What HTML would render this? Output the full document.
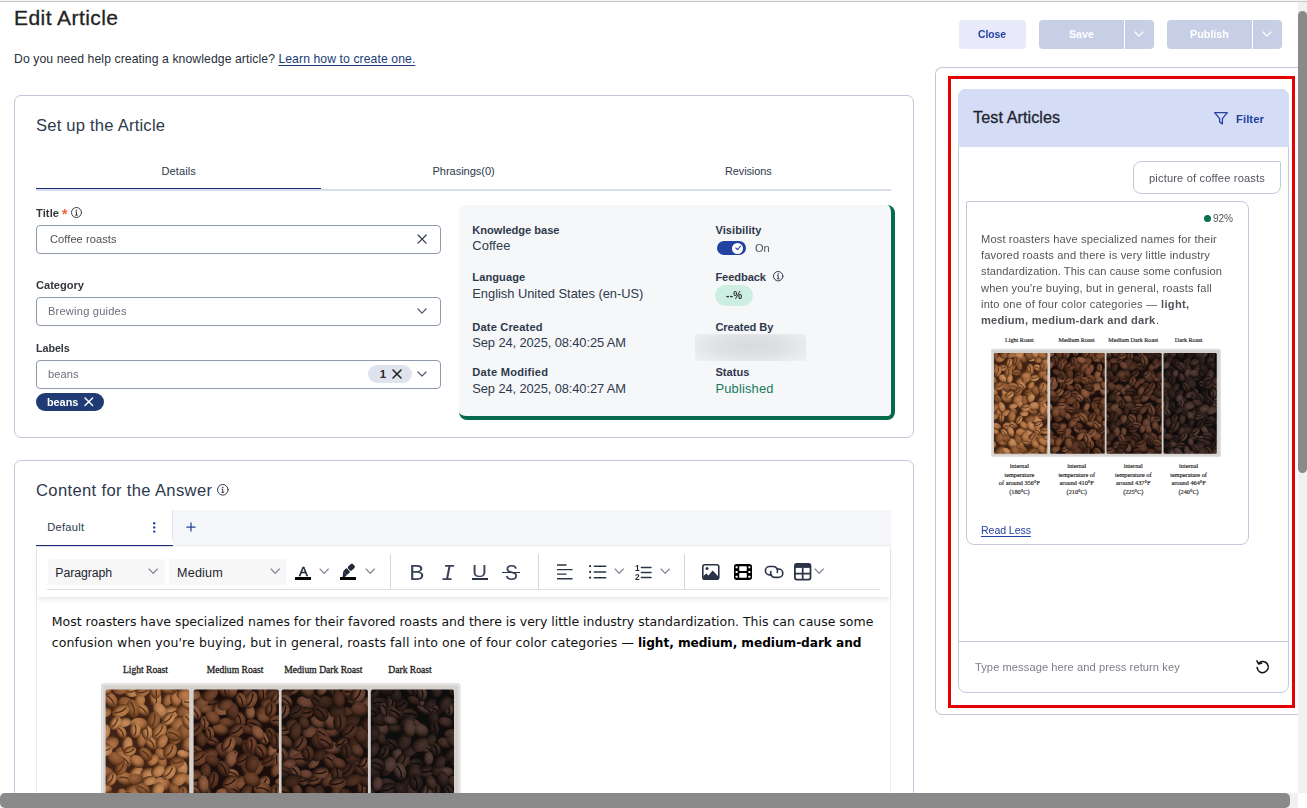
<!DOCTYPE html>
<html lang="en">
<head>
<meta charset="utf-8">
<title>Edit Article</title>
<style>
html,body{margin:0;padding:0;background:#fff}
body{width:1307px;height:808px;overflow:hidden;font-family:"Liberation Sans",sans-serif;color:#2e394c}
#app{position:relative;width:1307px;height:808px;overflow:hidden}
.g{will-change:transform}
#app *{position:absolute;box-sizing:border-box;margin:0;padding:0}
.t{white-space:pre;line-height:20px}
#app b,#app strong{position:static;font-weight:700}
a{color:inherit}
.card{border:1px solid #c2c6d8;border-radius:7px;background:#fff}
.inp{border:1px solid #8e99ad;border-radius:4px;background:#fff}
svg{overflow:visible}
#app svg *{position:static}
.ic{fill:none;stroke:#2e394c;stroke-width:1.3;stroke-linecap:round;stroke-linejoin:round}
.btn{border-radius:4px}
p{white-space:pre;line-height:20px}
</style>
</head>
<body>
<div id="app">
<header>
<div style="left:0px;top:0px;width:1307px;height:1px;background:#f6f6fa"></div>
<div style="left:0px;top:1px;width:1307px;height:1px;background:#c9c9c9"></div>
<h1 class="t" style="left:14.00px;top:8.00px;font-size:21px;color:#242424;letter-spacing:0.435px;font-weight:400;-webkit-text-stroke:0.3px #242424;">Edit Article</h1>
<span class="t" style="left:14.00px;top:49.00px;font-size:12.2px;color:#2a2f3a;letter-spacing:0.092px;">Do you need help creating a knowledge article? </span>
<a class="t" style="left:278.40px;top:49.00px;font-size:12.2px;color:#203b73;letter-spacing:0.089px;text-decoration:underline;text-underline-offset:2px;">Learn how to create one.</a>
<div class="btn" style="left:959px;top:20px;width:67px;height:29px;background:#e8eaf9"></div>
<span class="t g" style="left:978.40px;top:25.00px;font-size:10.4px;color:#23419f;font-weight:700;letter-spacing:-0.049px;">Close</span>
<div style="left:1039px;top:20px;width:85px;height:29px;background:#c7cfe7;border-radius:4px 0 0 4px"></div>
<div style="left:1125px;top:20px;width:29px;height:29px;background:#c7cfe7;border-radius:0 4px 4px 0"></div>
<span class="t g" style="left:1068.90px;top:24.00px;font-size:10.8px;color:#fff;font-weight:700;letter-spacing:-0.106px;">Save</span>
<svg class="ic" style="left:1135.0px;top:32.199999999999996px;" width="8" height="4.2" viewBox="0 0 8 4.2"><path d="M0 0L4.0 4.2L8 0" stroke="#fff" stroke-width="1.2"/></svg>
<div style="left:1167px;top:20px;width:85px;height:29px;background:#c7cfe7;border-radius:4px 0 0 4px"></div>
<div style="left:1253px;top:20px;width:29px;height:29px;background:#c7cfe7;border-radius:0 4px 4px 0"></div>
<span class="t g" style="left:1190.00px;top:24.00px;font-size:10.9px;color:#fff;font-weight:700;letter-spacing:-0.057px;">Publish</span>
<svg class="ic" style="left:1263.1px;top:32.199999999999996px;" width="8" height="4.2" viewBox="0 0 8 4.2"><path d="M0 0L4.0 4.2L8 0" stroke="#fff" stroke-width="1.2"/></svg>
</header>
<section>
<div class="card" style="left:14px;top:95px;width:900px;height:343px;"></div>
<h2 class="t" style="left:36.00px;top:116.00px;font-size:16.6px;color:#2e394c;letter-spacing:0.209px;font-weight:400;">Set up the Article</h2>
<div style="left:36px;top:189px;width:855px;height:2px;background:#d9deee"></div>
<div style="left:36px;top:188px;width:285px;height:1px;background:#1c2f75"></div>
<span class="t" style="left:161.50px;top:161.00px;font-size:11.1px;color:#2e394c;letter-spacing:0.080px;">Details</span>
<span class="t" style="left:432.50px;top:161.00px;font-size:11.1px;color:#2e394c;letter-spacing:-0.063px;">Phrasings(0)</span>
<span class="t" style="left:725.00px;top:161.00px;font-size:10.9px;color:#2e394c;letter-spacing:-0.077px;">Revisions</span>
<span class="t g" style="left:36.00px;top:203.00px;font-size:11.1px;color:#33363b;font-weight:700;letter-spacing:0.098px;">Title</span>
<span class="t g" style="left:61.80px;top:203.60px;font-size:14px;color:#f4602f;font-weight:700;">*</span>
<svg class="ic" style="left:70.85px;top:207.0px;" width="11.0" height="11.0" viewBox="0 0 11.0 11.0"><circle cx="5.5" cy="5.5" r="5.0" stroke="#3a3d44" stroke-width="1"/><circle cx="5.5" cy="3.2" r="0.75" fill="#3a3d44" stroke="none"/><path d="M4.3 4.9H5.5V8.1M4.1 8.1H6.9" stroke="#3a3d44" stroke-width="1" stroke-linecap="butt"/></svg>
<div class="inp" style="left:36px;top:225px;width:405px;height:29px;"></div>
<span class="t g" style="left:50.00px;top:229.00px;font-size:11.1px;color:#4b4e54;letter-spacing:0.060px;">Coffee roasts</span>
<svg class="ic" style="left:418.09999999999997px;top:235.3px;" width="8.2" height="8.2" viewBox="0 0 8.2 8.2"><path d="M0 0L8.2 8.2M8.2 0L0 8.2" stroke="#2e394c" stroke-width="1.2"/></svg>
<span class="t g" style="left:36.00px;top:275.00px;font-size:11.1px;color:#33363b;font-weight:700;letter-spacing:-0.013px;">Category</span>
<div class="inp" style="left:36px;top:297px;width:405px;height:29px;"></div>
<span class="t g" style="left:48.00px;top:301.00px;font-size:11.1px;color:#6b6f7b;letter-spacing:0.203px;">Brewing guides</span>
<svg class="ic" style="left:418.0px;top:308.9px;" width="8" height="4.2" viewBox="0 0 8 4.2"><path d="M0 0L4.0 4.2L8 0" stroke="#4b5566" stroke-width="1.2"/></svg>
<span class="t g" style="left:36.00px;top:338.00px;font-size:10.8px;color:#33363b;font-weight:700;letter-spacing:-0.084px;">Labels</span>
<div class="inp" style="left:36px;top:360px;width:405px;height:29px;"></div>
<span class="t g" style="left:48.00px;top:364.00px;font-size:11.1px;color:#6b6f7b;letter-spacing:0.066px;">beans</span>
<div style="left:368px;top:365px;width:44px;height:18px;background:#dfe3ee;border-radius:9px"></div>
<span class="t" style="left:379.80px;top:364.00px;font-size:11.4px;color:#26282d;font-weight:700;">1</span>
<svg class="ic" style="left:393.2px;top:370.3px;" width="8" height="8" viewBox="0 0 8 8"><path d="M0 0L8 8M8 0L0 8" stroke="#1c1c1c" stroke-width="1.5"/></svg>
<svg class="ic" style="left:418.0px;top:371.9px;" width="8" height="4.2" viewBox="0 0 8 4.2"><path d="M0 0L4.0 4.2L8 0" stroke="#4b5566" stroke-width="1.2"/></svg>
<div style="left:36px;top:393px;width:68px;height:18px;background:#203b73;border-radius:9px"></div>
<span class="t g" style="left:46.90px;top:392.00px;font-size:10.9px;color:#fff;font-weight:700;letter-spacing:-0.046px;">beans</span>
<svg class="ic" style="left:85.3px;top:398.3px;" width="7.6" height="7.6" viewBox="0 0 7.6 7.6"><path d="M0 0L7.6 7.6M7.6 0L0 7.6" stroke="#fff" stroke-width="1.4"/></svg>
<div style="left:459px;top:205px;width:436px;height:215px;background:#f6f7f9;border:solid #056a4c;border-width:0 4px 4px 0;border-radius:8px"></div>
<span class="t" style="left:472.30px;top:220.00px;font-size:11.1px;color:#2e394c;font-weight:700;letter-spacing:-0.027px;">Knowledge base</span>
<span class="t" style="left:472.30px;top:236.00px;font-size:12.9px;color:#2e394c;letter-spacing:0.070px;">Coffee</span>
<span class="t" style="left:472.30px;top:267.00px;font-size:11.1px;color:#2e394c;font-weight:700;letter-spacing:0.071px;">Language</span>
<span class="t" style="left:472.30px;top:284.00px;font-size:12.9px;color:#2e394c;letter-spacing:-0.030px;">English United States (en-US)</span>
<span class="t" style="left:472.30px;top:317.00px;font-size:11.1px;color:#2e394c;font-weight:700;letter-spacing:0.160px;">Date Created</span>
<span class="t" style="left:472.30px;top:333.00px;font-size:12.9px;color:#2e394c;letter-spacing:-0.106px;">Sep 24, 2025, 08:40:25 AM</span>
<span class="t" style="left:472.30px;top:362.00px;font-size:11.1px;color:#2e394c;font-weight:700;letter-spacing:0.247px;">Date Modified</span>
<span class="t" style="left:472.30px;top:379.00px;font-size:12.9px;color:#2e394c;letter-spacing:-0.106px;">Sep 24, 2025, 08:40:27 AM</span>
<span class="t" style="left:715.40px;top:220.00px;font-size:11.1px;color:#2e394c;font-weight:700;letter-spacing:0.075px;">Visibility</span>
<div style="left:717px;top:241px;width:29px;height:14px;background:#23419f;border-radius:7px"></div>
<div style="left:732.3px;top:242.6px;width:11px;height:11px;background:#fff;border-radius:50%"></div>
<svg class="ic" style="left:734.6px;top:245.3px;" width="6.4" height="5.6" viewBox="0 0 6.4 5.6"><path d="M0.8 3L2.6 4.7L5.6 1" stroke="#23419f" stroke-width="1.1"/></svg>
<span class="t g" style="left:755.00px;top:238.00px;font-size:11.0px;color:#4b4e54;letter-spacing:-0.087px;">On</span>
<span class="t" style="left:715.40px;top:267.00px;font-size:11.1px;color:#2e394c;font-weight:700;letter-spacing:-0.084px;">Feedback</span>
<svg class="ic" style="left:773.0999999999999px;top:271.40000000000003px;" width="10.4" height="10.4" viewBox="0 0 10.4 10.4"><circle cx="5.2" cy="5.2" r="4.7" stroke="#2e394c" stroke-width="1"/><circle cx="5.2" cy="2.9000000000000004" r="0.75" fill="#2e394c" stroke="none"/><path d="M4.0 4.6000000000000005H5.2V7.800000000000001M3.8000000000000003 7.800000000000001H6.6" stroke="#2e394c" stroke-width="1" stroke-linecap="butt"/></svg>
<div style="left:715px;top:285px;width:38px;height:21px;background:#ccefe2;border-radius:10.5px"></div>
<span class="t g" style="left:726.20px;top:286.00px;font-size:10px;color:#2a2d33;font-weight:700;letter-spacing:0.319px;">--%</span>
<span class="t" style="left:715.40px;top:317.00px;font-size:11.1px;color:#2e394c;font-weight:700;letter-spacing:-0.053px;">Created By</span>
<div style="left:695px;top:334px;width:111px;height:27px;border-radius:3px;background:radial-gradient(ellipse 62% 75% at 50% 45%,#d9dadd 0%,#dfe0e3 45%,#eeeff1 100%)"></div>
<span class="t" style="left:715.40px;top:362.00px;font-size:11.1px;color:#2e394c;font-weight:700;letter-spacing:0.039px;">Status</span>
<span class="t" style="left:715.40px;top:379.00px;font-size:12.9px;color:#157a5c;letter-spacing:0.184px;">Published</span>
</section>
<section>
<div class="card" style="left:14px;top:460px;width:900px;height:400px;"></div>
<h2 class="t" style="left:36.00px;top:481.00px;font-size:16.6px;color:#2e394c;letter-spacing:0.342px;font-weight:400;">Content for the Answer</h2>
<svg class="ic" style="left:217.39999999999998px;top:484.4px;" width="11.6" height="11.6" viewBox="0 0 11.6 11.6"><circle cx="5.8" cy="5.8" r="5.3" stroke="#2e394c" stroke-width="1"/><circle cx="5.8" cy="3.5" r="0.75" fill="#2e394c" stroke="none"/><path d="M4.6 5.2H5.8V8.4M4.4 8.4H7.199999999999999" stroke="#2e394c" stroke-width="1" stroke-linecap="butt"/></svg>
<div style="left:173px;top:510px;width:718px;height:36px;background:#f5f6fa;border-bottom:1px solid #ebecef"></div>
<div style="left:172px;top:510px;width:1px;height:31px;background:#e3e6f0"></div>
<div style="left:36px;top:545px;width:137px;height:1px;background:#1c2f75;box-shadow:0 0.5px 0 rgba(28,47,117,0.35)"></div>
<span class="t" style="left:47.30px;top:517.00px;font-size:11.1px;color:#2e394c;letter-spacing:0.257px;">Default</span>
<svg class="ic" style="left:152.6px;top:521.6px;" width="2.4" height="10.8" viewBox="0 0 2.4 10.8"><circle cx="1.2" cy="1.2" r="1.2" fill="#23419f" stroke="none"/><circle cx="1.2" cy="5.4" r="1.2" fill="#23419f" stroke="none"/><circle cx="1.2" cy="9.6" r="1.2" fill="#23419f" stroke="none"/></svg>
<svg class="ic" style="left:186.2px;top:522.2px;" width="10" height="10" viewBox="0 0 10 10"><path d="M5 0.4V9.6M0.4 5H9.6" stroke="#23419f" stroke-width="1.25" stroke-linecap="butt"/></svg>
<div style="left:36px;top:547px;width:855px;height:300px;border:1px solid #e9ebf1;border-top:0;background:#fff"></div>
<div style="left:37px;top:547px;width:853px;height:50px;background:#fff;box-shadow:0 3px 5px -1px rgba(40,50,70,0.13)"></div>
<div style="left:47px;top:589px;width:833px;height:1px;background:#dcdee3"></div>
<div style="left:48px;top:559px;width:117px;height:26px;background:#f7f7f8;border-radius:3px"></div>
<span class="t" style="left:55.30px;top:563.00px;font-size:12.3px;color:#1f2430;letter-spacing:-0.092px;">Paragraph</span>
<svg class="ic" style="left:149.0px;top:569.0px;" width="8.4" height="4.4" viewBox="0 0 8.4 4.4"><path d="M0 0L4.2 4.4L8.4 0" stroke="#7a8290" stroke-width="1.1"/></svg>
<div style="left:169px;top:559px;width:117px;height:26px;background:#f7f7f8;border-radius:3px"></div>
<span class="t" style="left:177.00px;top:563.00px;font-size:12.6px;color:#1f2430;letter-spacing:0.201px;">Medium</span>
<svg class="ic" style="left:271.1px;top:569.0px;" width="8.4" height="4.4" viewBox="0 0 8.4 4.4"><path d="M0 0L4.2 4.4L8.4 0" stroke="#7a8290" stroke-width="1.1"/></svg>
<span class="t g" style="left:298.60px;top:561.60px;font-size:13.2px;color:#1f2937;-webkit-text-stroke:0.6px #1f2937;">A</span>
<div style="left:294.5px;top:577.1px;width:16.5px;height:2.7px;background:#050505"></div>
<svg class="ic" style="left:320.40000000000003px;top:569.0px;" width="8.4" height="4.4" viewBox="0 0 8.4 4.4"><path d="M0 0L4.2 4.4L8.4 0" stroke="#7a8290" stroke-width="1.1"/></svg>
<svg class="ic" style="left:339.6px;top:563.2px;" width="16.6" height="14" viewBox="0 0 16.6 14"><g transform="translate(8.3 7.1) rotate(-43)" fill="#1f2937" stroke="none"><rect x="0.9" y="-2.7" width="6.6" height="5.4" rx="1.7"/><rect x="-4.3" y="-2.7" width="4.4" height="5.4" rx="0.4"/><path d="M-4.3 -2.7L-8.6 0.9V2.7H-4.3Z"/></g></svg>
<div style="left:339.6px;top:577.1px;width:16.5px;height:2.7px;background:#050505"></div>
<svg class="ic" style="left:366.40000000000003px;top:569.0px;" width="8.4" height="4.4" viewBox="0 0 8.4 4.4"><path d="M0 0L4.2 4.4L8.4 0" stroke="#7a8290" stroke-width="1.1"/></svg>
<div style="left:390px;top:554px;width:1px;height:35px;background:#d4d6db"></div>
<span class="t" style="left:409.20px;top:562.00px;font-size:22.8px;color:#3a4358;">B</span>
<span class="t" style="left:441.20px;top:564.00px;font-size:22.6px;color:#3a4358;font-family:'Liberation Mono', monospace;font-style:italic;">I</span>
<span class="t" style="left:471.90px;top:561.50px;font-size:17px;color:#3a4358;transform:scaleX(1.22);transform-origin:0 50%;">U</span>
<div style="left:472.1px;top:578.4px;width:15.7px;height:1.4px;background:#2b3446"></div>
<span class="t" style="left:504.60px;top:563.00px;font-size:22.6px;color:#3a4358;transform:scaleX(0.86);transform-origin:0 50%;">S</span>
<div style="left:502px;top:571.8px;width:18px;height:1.3px;background:#2b3446"></div>
<div style="left:538px;top:554px;width:1px;height:35px;background:#d4d6db"></div>
<svg class="ic" style="left:557.2px;top:564px;" width="16" height="15.6" viewBox="0 0 16 15.6"><path d="M0 0.95H9.5M0 5.6H15.5M0 10.1H9.5M0 14.7H15.5" stroke="#2b3446" stroke-width="1.4" stroke-linecap="butt"/></svg>
<svg class="ic" style="left:589px;top:565px;" width="17.2" height="14" viewBox="0 0 17.2 14"><path d="M5.3 1.2H16.7M5.3 6.9H16.7M5.3 12.7H16.7" stroke="#2b3446" stroke-width="1.5"/><circle cx="1.1" cy="1.2" r="1.1" fill="#2b3446" stroke="none"/><circle cx="1.1" cy="6.9" r="1.1" fill="#2b3446" stroke="none"/><circle cx="1.1" cy="12.7" r="1.1" fill="#2b3446" stroke="none"/></svg>
<svg class="ic" style="left:615.3px;top:569.0px;" width="8.4" height="4.4" viewBox="0 0 8.4 4.4"><path d="M0 0L4.2 4.4L8.4 0" stroke="#7a8290" stroke-width="1.1"/></svg>
<svg class="ic" style="left:635px;top:564.5px;will-change:transform;" width="16.4" height="15" viewBox="0 0 16.4 15"><path d="M6.4 2.4H16M6.4 7.4H16M6.4 12.4H16" stroke="#2b3446" stroke-width="1.5"/><text x="-0.1" y="6.3" font-family="Liberation Sans, sans-serif" font-weight="700" font-size="8.4" fill="#1f2937" stroke="none">1</text><text x="-0.1" y="14.6" font-family="Liberation Sans, sans-serif" font-weight="700" font-size="8.4" fill="#1f2937" stroke="none">2</text></svg>
<svg class="ic" style="left:661.4px;top:569.0px;" width="8.4" height="4.4" viewBox="0 0 8.4 4.4"><path d="M0 0L4.2 4.4L8.4 0" stroke="#7a8290" stroke-width="1.1"/></svg>
<div style="left:684px;top:554px;width:1px;height:35px;background:#d4d6db"></div>
<svg class="ic" style="left:702.2px;top:564px;" width="17.6" height="16" viewBox="0 0 17.6 16"><rect x="0.8" y="0.8" width="16" height="14.4" rx="2" stroke="#2b3446" stroke-width="1.6"/><circle cx="5" cy="4.5" r="1.5" fill="#2b3446" stroke="none"/><path d="M1.2 15V12L4.3 9.6L6.4 11.4L10.7 6.4L16.4 12.6V15Z" fill="#2b3446" stroke="none"/></svg>
<svg class="ic" style="left:734px;top:564.1px;" width="18" height="15.9" viewBox="0 0 18 15.9"><rect x="0" y="0" width="18" height="15.9" rx="2.6" fill="#000" stroke="none"/><rect x="5.2" y="2.2" width="7.6" height="4.8" rx="0.8" fill="#fff" stroke="none"/><rect x="5.2" y="9" width="7.6" height="4.8" rx="0.8" fill="#fff" stroke="none"/><g fill="#fff" stroke="none"><rect x="1.6" y="2.3" width="2" height="2" rx="0.5"/><rect x="1.6" y="7" width="2" height="2" rx="0.5"/><rect x="1.6" y="11.7" width="2" height="2" rx="0.5"/><rect x="14.4" y="2.3" width="2" height="2" rx="0.5"/><rect x="14.4" y="7" width="2" height="2" rx="0.5"/><rect x="14.4" y="11.7" width="2" height="2" rx="0.5"/></g></svg>
<svg class="ic" style="left:765px;top:566px;" width="18.4" height="12" viewBox="0 0 18.4 12"><path d="M6.4 8.9H4.6A4.2 4.2 0 0 1 4.6 0.5H8.4A4.2 4.2 0 0 1 12.3 6.3" stroke="#2b3446" stroke-width="1.6"/><path d="M11.8 3H13.6A4.2 4.2 0 0 1 13.6 11.4H9.8A4.2 4.2 0 0 1 5.9 5.6" stroke="#2b3446" stroke-width="1.6"/></svg>
<svg class="ic" style="left:794.2px;top:563.2px;" width="17.4" height="17.5" viewBox="0 0 17.4 17.5"><rect x="0.9" y="0.9" width="15.6" height="15.7" rx="2" stroke="#2b3446" stroke-width="1.8"/><rect x="0.9" y="0.9" width="15.6" height="4" fill="#2b3446" stroke="none"/><path d="M8.7 4.5V16.6M0.9 10.7H16.5" stroke="#2b3446" stroke-width="1.7" stroke-linecap="butt"/></svg>
<svg class="ic" style="left:815.1999999999999px;top:569.0px;" width="8.4" height="4.4" viewBox="0 0 8.4 4.4"><path d="M0 0L4.2 4.4L8.4 0" stroke="#7a8290" stroke-width="1.1"/></svg>
<p class="t" style="left:51.80px;top:612.00px;font-size:12.5px;color:#111;font-family:'DejaVu Sans', sans-serif;letter-spacing:-0.013px;">Most roasters have specialized names for their favored roasts and there is very little industry standardization. This can cause some</p>
<p class="t" style="left:51.80px;top:633.00px;font-size:12.5px;color:#111;font-family:'DejaVu Sans', sans-serif;letter-spacing:0.098px;">confusion when you're buying, but in general, roasts fall into one of four color categories — </p>
<p class="t" style="left:638.00px;top:633.00px;font-size:12.2px;color:#000;font-family:'DejaVu Sans', sans-serif;font-weight:700;letter-spacing:-0.080px;">light, medium, medium-dark and</p>
<svg class="pic" style="left:101.1px;top:660px" width="360.60" height="134.00" viewBox="0 0 360.6 134.00" role="img" aria-label="Coffee roasts: light, medium, medium dark and dark"><defs><filter id="bla" x="-5%" y="-5%" width="110%" height="110%"><feGaussianBlur stdDeviation="0.45"/></filter><radialGradient id="ga00" cx="0.42" cy="0.36" r="0.62"><stop offset="0" stop-color="#c28150"/><stop offset="0.55" stop-color="#a66c40"/><stop offset="1" stop-color="#583218"/></radialGradient><radialGradient id="ga01" cx="0.42" cy="0.36" r="0.62"><stop offset="0" stop-color="#b27548"/><stop offset="0.55" stop-color="#986139"/><stop offset="1" stop-color="#583218"/></radialGradient><radialGradient id="ga02" cx="0.42" cy="0.36" r="0.62"><stop offset="0" stop-color="#9e653d"/><stop offset="0.55" stop-color="#86532f"/><stop offset="1" stop-color="#583218"/></radialGradient><radialGradient id="ga03" cx="0.42" cy="0.36" r="0.62"><stop offset="0" stop-color="#cd8e5c"/><stop offset="0.55" stop-color="#b0784b"/><stop offset="1" stop-color="#583218"/></radialGradient><clipPath id="ca0"><rect x="4.6" y="29.6" width="83.6" height="157.8" rx="2"/></clipPath><radialGradient id="ga10" cx="0.42" cy="0.36" r="0.62"><stop offset="0" stop-color="#835237"/><stop offset="0.55" stop-color="#6e422a"/><stop offset="1" stop-color="#2c180f"/></radialGradient><radialGradient id="ga11" cx="0.42" cy="0.36" r="0.62"><stop offset="0" stop-color="#744730"/><stop offset="0.55" stop-color="#603824"/><stop offset="1" stop-color="#2c180f"/></radialGradient><radialGradient id="ga12" cx="0.42" cy="0.36" r="0.62"><stop offset="0" stop-color="#623c2a"/><stop offset="0.55" stop-color="#502e1e"/><stop offset="1" stop-color="#2c180f"/></radialGradient><radialGradient id="ga13" cx="0.42" cy="0.36" r="0.62"><stop offset="0" stop-color="#935f42"/><stop offset="0.55" stop-color="#7c4e34"/><stop offset="1" stop-color="#2c180f"/></radialGradient><clipPath id="ca1"><rect x="92.6" y="29.6" width="85.3" height="157.8" rx="2"/></clipPath><radialGradient id="ga20" cx="0.42" cy="0.36" r="0.62"><stop offset="0" stop-color="#643f2f"/><stop offset="0.55" stop-color="#523123"/><stop offset="1" stop-color="#1e120d"/></radialGradient><radialGradient id="ga21" cx="0.42" cy="0.36" r="0.62"><stop offset="0" stop-color="#543527"/><stop offset="0.55" stop-color="#44281c"/><stop offset="1" stop-color="#1e120d"/></radialGradient><radialGradient id="ga22" cx="0.42" cy="0.36" r="0.62"><stop offset="0" stop-color="#462d23"/><stop offset="0.55" stop-color="#372118"/><stop offset="1" stop-color="#1e120d"/></radialGradient><radialGradient id="ga23" cx="0.42" cy="0.36" r="0.62"><stop offset="0" stop-color="#714a39"/><stop offset="0.55" stop-color="#5e3b2c"/><stop offset="1" stop-color="#1e120d"/></radialGradient><clipPath id="ca2"><rect x="180.6" y="29.6" width="86.3" height="157.8" rx="2"/></clipPath><radialGradient id="ga30" cx="0.42" cy="0.36" r="0.62"><stop offset="0" stop-color="#49342d"/><stop offset="0.55" stop-color="#3a2721"/><stop offset="1" stop-color="#160e0c"/></radialGradient><radialGradient id="ga31" cx="0.42" cy="0.36" r="0.62"><stop offset="0" stop-color="#3d2c27"/><stop offset="0.55" stop-color="#2f201c"/><stop offset="1" stop-color="#160e0c"/></radialGradient><radialGradient id="ga32" cx="0.42" cy="0.36" r="0.62"><stop offset="0" stop-color="#342623"/><stop offset="0.55" stop-color="#271b18"/><stop offset="1" stop-color="#160e0c"/></radialGradient><radialGradient id="ga33" cx="0.42" cy="0.36" r="0.62"><stop offset="0" stop-color="#564039"/><stop offset="0.55" stop-color="#46322c"/><stop offset="1" stop-color="#160e0c"/></radialGradient><clipPath id="ca3"><rect x="269.8" y="29.6" width="83.2" height="157.8" rx="2"/></clipPath></defs><g font-family="Liberation Serif, serif" font-size="9.6" fill="#1c1c1c" stroke="#222" stroke-width="0.3" text-anchor="middle"><text x="44.4" y="13">Light Roast</text><text x="134.0" y="13">Medium Roast</text><text x="222.4" y="13">Medium Dark Roast</text><text x="309.0" y="13">Dark Roast</text></g><rect x="0" y="23.2" width="359.6" height="169.2" rx="3" fill="#dddbd9"/><rect x="1.6" y="24.8" width="356.40000000000003" height="166.0" rx="2.5" fill="#d4d1ce" stroke="#e8e6e4" stroke-width="1.2"/><g clip-path="url(#ca0)"><g filter="url(#bla)"><rect x="2.5999999999999996" y="27.6" width="87.6" height="161.8" fill="#402412"/><g transform="translate(17.8 94.2)rotate(106)"><ellipse rx="7.4" ry="4.9" fill="url(#ga02)"/></g><g transform="translate(34.4 113.6)rotate(133)"><ellipse rx="8.9" ry="5.6" fill="url(#ga03)"/></g><g transform="translate(31.4 131.5)rotate(149)"><ellipse rx="8.9" ry="6.3" fill="url(#ga01)"/></g><g transform="translate(60.6 101)rotate(79)"><ellipse rx="8.1" ry="5" fill="url(#ga01)"/></g><g transform="translate(74.8 143.5)rotate(25)"><ellipse rx="8.8" ry="5.7" fill="url(#ga00)"/></g><g transform="translate(38.6 40.9)rotate(100)"><ellipse rx="7.5" ry="5.4" fill="url(#ga00)"/></g><g transform="translate(4.6 129)rotate(8)"><ellipse rx="6.8" ry="4.4" fill="url(#ga00)"/></g><g transform="translate(31.9 30.7)rotate(164)"><ellipse rx="8.2" ry="6.2" fill="url(#ga03)"/><path d="M-5.7 .6Q0 -2.5 5.7 .4" fill="none" stroke="#543016" stroke-width="1.3"/></g><g transform="translate(26 44.7)rotate(36)"><ellipse rx="9.3" ry="6.8" fill="url(#ga02)"/></g><g transform="translate(19.7 28.6)rotate(169)"><ellipse rx="8.1" ry="5.7" fill="url(#ga02)"/></g><g transform="translate(54.4 38.4)rotate(81)"><ellipse rx="9.1" ry="6" fill="url(#ga03)"/><path d="M-6.4 .6Q0 -2.4 6.4 .4" fill="none" stroke="#543016" stroke-width="1.3"/></g><g transform="translate(41.5 49.5)rotate(43)"><ellipse rx="7.8" ry="5" fill="url(#ga00)"/><path d="M-5.5 .6Q0 -2 5.5 .4" fill="none" stroke="#543016" stroke-width="1.3"/></g><g transform="translate(74.8 78.9)rotate(140)"><ellipse rx="7.4" ry="4.8" fill="url(#ga02)"/><path d="M-5.2 .6Q0 -1.9 5.2 .4" fill="none" stroke="#543016" stroke-width="1.3"/></g><g transform="translate(22.8 99.7)rotate(40)"><ellipse rx="9.1" ry="7.2" fill="url(#ga00)"/><path d="M-6.4 .6Q0 -2.9 6.4 .4" fill="none" stroke="#543016" stroke-width="1.3"/></g><g transform="translate(76.5 63.4)rotate(150)"><ellipse rx="8" ry="6.4" fill="url(#ga01)"/></g><g transform="translate(31.9 48.5)rotate(76)"><ellipse rx="9.4" ry="6.5" fill="url(#ga02)"/><path d="M-6.6 .6Q0 -2.6 6.6 .4" fill="none" stroke="#543016" stroke-width="1.3"/></g><g transform="translate(26.1 85.1)rotate(100)"><ellipse rx="8.6" ry="5.4" fill="url(#ga03)"/></g><g transform="translate(50.3 82.8)rotate(53)"><ellipse rx="7.7" ry="5.5" fill="url(#ga00)"/><path d="M-5.4 .6Q0 -2.2 5.4 .4" fill="none" stroke="#543016" stroke-width="1.3"/></g><g transform="translate(19.6 50.7)rotate(158)"><ellipse rx="9.2" ry="6.1" fill="url(#ga00)"/><path d="M-6.4 .6Q0 -2.4 6.4 .4" fill="none" stroke="#543016" stroke-width="1.3"/></g><g transform="translate(59.8 94.1)rotate(49)"><ellipse rx="6.7" ry="5.1" fill="url(#ga01)"/></g><g transform="translate(69.3 52.2)rotate(170)"><ellipse rx="9" ry="6.7" fill="url(#ga03)"/><path d="M-6.3 .6Q0 -2.7 6.3 .4" fill="none" stroke="#543016" stroke-width="1.3"/></g><g transform="translate(58.2 71.3)rotate(126)"><ellipse rx="9.2" ry="6.6" fill="url(#ga00)"/><path d="M-6.4 .6Q0 -2.7 6.4 .4" fill="none" stroke="#543016" stroke-width="1.3"/></g><g transform="translate(83.3 50.2)rotate(161)"><ellipse rx="8.8" ry="5.8" fill="url(#ga02)"/></g><g transform="translate(24 118.5)rotate(15)"><ellipse rx="8.4" ry="6.4" fill="url(#ga01)"/><path d="M-5.9 .6Q0 -2.6 5.9 .4" fill="none" stroke="#543016" stroke-width="1.3"/></g><g transform="translate(58.9 51.1)rotate(61)"><ellipse rx="9" ry="6.3" fill="url(#ga03)"/></g><g transform="translate(40.4 80.1)rotate(95)"><ellipse rx="7.4" ry="4.7" fill="url(#ga01)"/></g><g transform="translate(15.3 99.2)rotate(33)"><ellipse rx="9.3" ry="6.2" fill="url(#ga02)"/></g><g transform="translate(54.4 31.1)rotate(80)"><ellipse rx="8.1" ry="5.3" fill="url(#ga01)"/><path d="M-5.7 .6Q0 -2.1 5.7 .4" fill="none" stroke="#543016" stroke-width="1.3"/></g><g transform="translate(60.8 124.2)rotate(7)"><ellipse rx="8.9" ry="7.1" fill="url(#ga00)"/></g><g transform="translate(46 72.3)rotate(85)"><ellipse rx="8.1" ry="5.3" fill="url(#ga03)"/><path d="M-5.7 .6Q0 -2.1 5.7 .4" fill="none" stroke="#543016" stroke-width="1.3"/></g><g transform="translate(80.5 108.6)rotate(89)"><ellipse rx="8.9" ry="6.2" fill="url(#ga03)"/></g><g transform="translate(88.4 120.5)rotate(41)"><ellipse rx="7.5" ry="4.9" fill="url(#ga01)"/></g><g transform="translate(83.4 72.7)rotate(73)"><ellipse rx="8.6" ry="6.3" fill="url(#ga02)"/></g><g transform="translate(80.3 134.8)rotate(113)"><ellipse rx="8.9" ry="5.6" fill="url(#ga02)"/><path d="M-6.3 .6Q0 -2.2 6.3 .4" fill="none" stroke="#543016" stroke-width="1.3"/></g><g transform="translate(72.9 129.2)rotate(69)"><ellipse rx="6.8" ry="5" fill="url(#ga02)"/></g><g transform="translate(41.7 128.8)rotate(33)"><ellipse rx="8.5" ry="5.4" fill="url(#ga02)"/><path d="M-6 .6Q0 -2.1 6 .4" fill="none" stroke="#543016" stroke-width="1.3"/></g><g transform="translate(76.2 102.1)rotate(175)"><ellipse rx="7.3" ry="5.8" fill="url(#ga02)"/><path d="M-5.1 .6Q0 -2.3 5.1 .4" fill="none" stroke="#543016" stroke-width="1.3"/></g><g transform="translate(87.7 61.5)rotate(64)"><ellipse rx="9.3" ry="6.3" fill="url(#ga00)"/><path d="M-6.5 .6Q0 -2.5 6.5 .4" fill="none" stroke="#543016" stroke-width="1.3"/></g><g transform="translate(66.6 40.1)rotate(118)"><ellipse rx="6.8" ry="4.6" fill="url(#ga01)"/></g><g transform="translate(82.6 94.3)rotate(16)"><ellipse rx="6.6" ry="4.4" fill="url(#ga03)"/></g><g transform="translate(93.3 102.9)rotate(113)"><ellipse rx="7.7" ry="5.2" fill="url(#ga00)"/></g><g transform="translate(56.5 130)rotate(118)"><ellipse rx="8.1" ry="6.1" fill="url(#ga03)"/></g><g transform="translate(9.5 39.7)rotate(51)"><ellipse rx="8.6" ry="6.1" fill="url(#ga01)"/><path d="M-6 .6Q0 -2.4 6 .4" fill="none" stroke="#543016" stroke-width="1.3"/></g><g transform="translate(90.3 143.6)rotate(113)"><ellipse rx="8.9" ry="7" fill="url(#ga01)"/></g><g transform="translate(77.9 119.1)rotate(146)"><ellipse rx="8.7" ry="6.3" fill="url(#ga00)"/></g><g transform="translate(69 91)rotate(123)"><ellipse rx="8.2" ry="6.4" fill="url(#ga01)"/><path d="M-5.8 .6Q0 -2.6 5.8 .4" fill="none" stroke="#543016" stroke-width="1.3"/></g><g transform="translate(23.3 62.1)rotate(173)"><ellipse rx="6.7" ry="4.9" fill="url(#ga03)"/></g><g transform="translate(87 83.5)rotate(113)"><ellipse rx="8.2" ry="6" fill="url(#ga01)"/></g><g transform="translate(51.7 99.9)rotate(135)"><ellipse rx="6.6" ry="5" fill="url(#ga00)"/></g><g transform="translate(4.4 29.2)rotate(45)"><ellipse rx="6.8" ry="5.1" fill="url(#ga00)"/></g><g transform="translate(12.3 139.1)rotate(42)"><ellipse rx="7.3" ry="5.5" fill="url(#ga03)"/></g><g transform="translate(60.8 81.3)rotate(123)"><ellipse rx="7.7" ry="5.4" fill="url(#ga00)"/></g><g transform="translate(5.7 112.4)rotate(27)"><ellipse rx="8.4" ry="5.3" fill="url(#ga02)"/></g><g transform="translate(88.8 43.8)rotate(24)"><ellipse rx="8.5" ry="6.2" fill="url(#ga03)"/><path d="M-6 .6Q0 -2.5 6 .4" fill="none" stroke="#543016" stroke-width="1.3"/></g><g transform="translate(14.2 63)rotate(125)"><ellipse rx="7.4" ry="5.4" fill="url(#ga03)"/><path d="M-5.1 .6Q0 -2.2 5.1 .4" fill="none" stroke="#543016" stroke-width="1.3"/></g><g transform="translate(74.6 38.9)rotate(84)"><ellipse rx="8" ry="5.7" fill="url(#ga00)"/></g><g transform="translate(53.6 143)rotate(15)"><ellipse rx="8.1" ry="5.5" fill="url(#ga03)"/><path d="M-5.7 .6Q0 -2.2 5.7 .4" fill="none" stroke="#543016" stroke-width="1.3"/></g><g transform="translate(47.2 113.7)rotate(174)"><ellipse rx="7.9" ry="6.1" fill="url(#ga03)"/></g><g transform="translate(83.1 33.9)rotate(167)"><ellipse rx="7.7" ry="6" fill="url(#ga00)"/></g><g transform="translate(3.4 52.2)rotate(171)"><ellipse rx="7" ry="5" fill="url(#ga01)"/></g><g transform="translate(67.6 28.7)rotate(20)"><ellipse rx="8.4" ry="5.6" fill="url(#ga02)"/><path d="M-5.9 .6Q0 -2.2 5.9 .4" fill="none" stroke="#543016" stroke-width="1.3"/></g><g transform="translate(38.3 64.2)rotate(4)"><ellipse rx="9.1" ry="6.4" fill="url(#ga00)"/></g><g transform="translate(67.8 112.5)rotate(131)"><ellipse rx="8.5" ry="5.9" fill="url(#ga03)"/><path d="M-6 .6Q0 -2.4 6 .4" fill="none" stroke="#543016" stroke-width="1.3"/></g><g transform="translate(34.6 119.2)rotate(0)"><ellipse rx="7.5" ry="5.8" fill="url(#ga02)"/></g><g transform="translate(19.8 108.5)rotate(128)"><ellipse rx="6.9" ry="5.5" fill="url(#ga02)"/><path d="M-4.9 .6Q0 -2.2 4.9 .4" fill="none" stroke="#543016" stroke-width="1.3"/></g><g transform="translate(28.7 91.2)rotate(157)"><ellipse rx="6.8" ry="4.7" fill="url(#ga00)"/><path d="M-4.7 .6Q0 -1.9 4.7 .4" fill="none" stroke="#543016" stroke-width="1.3"/></g><g transform="translate(38.3 144.9)rotate(9)"><ellipse rx="7.8" ry="5.2" fill="url(#ga00)"/><path d="M-5.5 .6Q0 -2.1 5.5 .4" fill="none" stroke="#543016" stroke-width="1.3"/></g><g transform="translate(73 74.7)rotate(27)"><ellipse rx="8.5" ry="6.2" fill="url(#ga02)"/><path d="M-5.9 .6Q0 -2.5 5.9 .4" fill="none" stroke="#543016" stroke-width="1.3"/></g><g transform="translate(56.8 110.9)rotate(141)"><ellipse rx="7.5" ry="5.7" fill="url(#ga03)"/></g><g transform="translate(9 83)rotate(164)"><ellipse rx="8.9" ry="6.5" fill="url(#ga01)"/></g><g transform="translate(21 135.1)rotate(81)"><ellipse rx="6.7" ry="5.1" fill="url(#ga01)"/></g><g transform="translate(41.5 31.7)rotate(167)"><ellipse rx="7.4" ry="4.7" fill="url(#ga01)"/><path d="M-5.2 .6Q0 -1.9 5.2 .4" fill="none" stroke="#543016" stroke-width="1.3"/></g><g transform="translate(44.9 94.3)rotate(46)"><ellipse rx="7.8" ry="5.2" fill="url(#ga02)"/><path d="M-5.4 .6Q0 -2.1 5.4 .4" fill="none" stroke="#543016" stroke-width="1.3"/></g><g transform="translate(10.1 119.2)rotate(120)"><ellipse rx="7.3" ry="5.1" fill="url(#ga00)"/><path d="M-5.1 .6Q0 -2.1 5.1 .4" fill="none" stroke="#543016" stroke-width="1.3"/></g><g transform="translate(48.3 120.6)rotate(163)"><ellipse rx="7.1" ry="4.6" fill="url(#ga03)"/></g><g transform="translate(67.5 58.9)rotate(137)"><ellipse rx="7.9" ry="5.3" fill="url(#ga03)"/><path d="M-5.5 .6Q0 -2.1 5.5 .4" fill="none" stroke="#543016" stroke-width="1.3"/></g><g transform="translate(20.5 72.1)rotate(62)"><ellipse rx="7.1" ry="4.5" fill="url(#ga00)"/><path d="M-5 .6Q0 -1.8 5 .4" fill="none" stroke="#543016" stroke-width="1.3"/></g><g transform="translate(36.2 101.5)rotate(36)"><ellipse rx="7.6" ry="5.8" fill="url(#ga00)"/></g><g transform="translate(34.2 70.3)rotate(94)"><ellipse rx="7.8" ry="5.4" fill="url(#ga03)"/><path d="M-5.4 .6Q0 -2.2 5.4 .4" fill="none" stroke="#543016" stroke-width="1.3"/></g><g transform="translate(52.7 60.1)rotate(103)"><ellipse rx="8.7" ry="6.2" fill="url(#ga02)"/><path d="M-6.1 .6Q0 -2.5 6.1 .4" fill="none" stroke="#543016" stroke-width="1.3"/></g><g transform="translate(25.4 138.3)rotate(155)"><ellipse rx="8" ry="5.9" fill="url(#ga01)"/><path d="M-5.6 .6Q0 -2.3 5.6 .4" fill="none" stroke="#543016" stroke-width="1.3"/></g><g transform="translate(2.4 72.8)rotate(116)"><ellipse rx="9.1" ry="6.3" fill="url(#ga03)"/></g><g transform="translate(62.4 140.7)rotate(4)"><ellipse rx="9" ry="7" fill="url(#ga00)"/><path d="M-6.3 .6Q0 -2.8 6.3 .4" fill="none" stroke="#543016" stroke-width="1.3"/></g><g transform="translate(3 89.8)rotate(174)"><ellipse rx="8.7" ry="6.7" fill="url(#ga03)"/><path d="M-6.1 .6Q0 -2.7 6.1 .4" fill="none" stroke="#543016" stroke-width="1.3"/></g></g></g><g clip-path="url(#ca1)"><g filter="url(#bla)"><rect x="90.6" y="27.6" width="89.3" height="161.8" fill="#1e100a"/><g transform="translate(155.3 108.5)rotate(132)"><ellipse rx="9.4" ry="5.9" fill="url(#ga11)"/></g><g transform="translate(147.3 88.3)rotate(67)"><ellipse rx="8.9" ry="6.2" fill="url(#ga12)"/><path d="M-6.2 .6Q0 -2.5 6.2 .4" fill="none" stroke="#20110a" stroke-width="1.3"/></g><g transform="translate(103.3 63)rotate(87)"><ellipse rx="6.7" ry="4.7" fill="url(#ga13)"/><path d="M-4.7 .6Q0 -1.9 4.7 .4" fill="none" stroke="#20110a" stroke-width="1.3"/></g><g transform="translate(141.1 138.7)rotate(115)"><ellipse rx="7.7" ry="5.5" fill="url(#ga10)"/></g><g transform="translate(109.9 43.6)rotate(178)"><ellipse rx="7.7" ry="5.2" fill="url(#ga12)"/><path d="M-5.4 .6Q0 -2.1 5.4 .4" fill="none" stroke="#20110a" stroke-width="1.3"/></g><g transform="translate(130.4 94.7)rotate(159)"><ellipse rx="6.7" ry="5.1" fill="url(#ga13)"/><path d="M-4.7 .6Q0 -2 4.7 .4" fill="none" stroke="#20110a" stroke-width="1.3"/></g><g transform="translate(147.5 108.4)rotate(65)"><ellipse rx="9" ry="7.2" fill="url(#ga11)"/><path d="M-6.3 .6Q0 -2.9 6.3 .4" fill="none" stroke="#20110a" stroke-width="1.3"/></g><g transform="translate(138.5 59.9)rotate(78)"><ellipse rx="7.7" ry="6.1" fill="url(#ga11)"/><path d="M-5.4 .6Q0 -2.4 5.4 .4" fill="none" stroke="#20110a" stroke-width="1.3"/></g><g transform="translate(174.8 142)rotate(159)"><ellipse rx="8.9" ry="6.2" fill="url(#ga13)"/></g><g transform="translate(132 113.8)rotate(26)"><ellipse rx="7" ry="4.4" fill="url(#ga13)"/><path d="M-4.9 .6Q0 -1.8 4.9 .4" fill="none" stroke="#20110a" stroke-width="1.3"/></g><g transform="translate(150.1 84.9)rotate(91)"><ellipse rx="8.3" ry="5.7" fill="url(#ga11)"/><path d="M-5.8 .6Q0 -2.3 5.8 .4" fill="none" stroke="#20110a" stroke-width="1.3"/></g><g transform="translate(102.4 143.5)rotate(12)"><ellipse rx="7.1" ry="4.6" fill="url(#ga13)"/></g><g transform="translate(122.6 90.4)rotate(36)"><ellipse rx="8.9" ry="7" fill="url(#ga11)"/></g><g transform="translate(162.6 78.5)rotate(57)"><ellipse rx="6.7" ry="5.3" fill="url(#ga13)"/><path d="M-4.7 .6Q0 -2.1 4.7 .4" fill="none" stroke="#20110a" stroke-width="1.3"/></g><g transform="translate(108.2 95.1)rotate(160)"><ellipse rx="8.6" ry="6.4" fill="url(#ga11)"/></g><g transform="translate(161.7 33.2)rotate(85)"><ellipse rx="8.3" ry="5.5" fill="url(#ga11)"/><path d="M-5.8 .6Q0 -2.2 5.8 .4" fill="none" stroke="#20110a" stroke-width="1.3"/></g><g transform="translate(96.4 94.3)rotate(65)"><ellipse rx="9.2" ry="6" fill="url(#ga11)"/><path d="M-6.5 .6Q0 -2.4 6.5 .4" fill="none" stroke="#20110a" stroke-width="1.3"/></g><g transform="translate(150 143.4)rotate(7)"><ellipse rx="8.6" ry="6.7" fill="url(#ga10)"/></g><g transform="translate(100.1 79.4)rotate(82)"><ellipse rx="7.5" ry="5.2" fill="url(#ga12)"/></g><g transform="translate(104.7 131.4)rotate(70)"><ellipse rx="7.5" ry="5" fill="url(#ga12)"/><path d="M-5.2 .6Q0 -2 5.2 .4" fill="none" stroke="#20110a" stroke-width="1.3"/></g><g transform="translate(170.7 90.4)rotate(111)"><ellipse rx="7.8" ry="4.9" fill="url(#ga13)"/></g><g transform="translate(161.3 51.4)rotate(147)"><ellipse rx="7.9" ry="5.7" fill="url(#ga11)"/></g><g transform="translate(170.2 74.8)rotate(65)"><ellipse rx="7.7" ry="4.9" fill="url(#ga12)"/><path d="M-5.4 .6Q0 -2 5.4 .4" fill="none" stroke="#20110a" stroke-width="1.3"/></g><g transform="translate(177 61)rotate(7)"><ellipse rx="7.8" ry="5.6" fill="url(#ga11)"/><path d="M-5.5 .6Q0 -2.2 5.5 .4" fill="none" stroke="#20110a" stroke-width="1.3"/></g><g transform="translate(129.9 29.2)rotate(92)"><ellipse rx="8.7" ry="6.6" fill="url(#ga10)"/></g><g transform="translate(99.8 42)rotate(141)"><ellipse rx="9.1" ry="6.7" fill="url(#ga10)"/></g><g transform="translate(97.8 98.1)rotate(147)"><ellipse rx="9.4" ry="7.1" fill="url(#ga11)"/><path d="M-6.6 .6Q0 -2.8 6.6 .4" fill="none" stroke="#20110a" stroke-width="1.3"/></g><g transform="translate(108.9 34.1)rotate(146)"><ellipse rx="9.1" ry="6.1" fill="url(#ga11)"/></g><g transform="translate(142.3 99.6)rotate(150)"><ellipse rx="8.6" ry="5.7" fill="url(#ga12)"/><path d="M-6 .6Q0 -2.3 6 .4" fill="none" stroke="#20110a" stroke-width="1.3"/></g><g transform="translate(135.9 70.3)rotate(147)"><ellipse rx="9.1" ry="6.1" fill="url(#ga11)"/><path d="M-6.4 .6Q0 -2.4 6.4 .4" fill="none" stroke="#20110a" stroke-width="1.3"/></g><g transform="translate(173.7 133.3)rotate(107)"><ellipse rx="9.3" ry="6.6" fill="url(#ga11)"/><path d="M-6.5 .6Q0 -2.6 6.5 .4" fill="none" stroke="#20110a" stroke-width="1.3"/></g><g transform="translate(136.6 80.9)rotate(29)"><ellipse rx="6.7" ry="4.4" fill="url(#ga12)"/></g><g transform="translate(137.4 123.1)rotate(141)"><ellipse rx="9.1" ry="5.9" fill="url(#ga10)"/></g><g transform="translate(92.8 34.6)rotate(174)"><ellipse rx="6.7" ry="5.2" fill="url(#ga13)"/></g><g transform="translate(122.8 134.8)rotate(19)"><ellipse rx="8.2" ry="6.4" fill="url(#ga13)"/></g><g transform="translate(122.9 29.8)rotate(66)"><ellipse rx="7.6" ry="5.3" fill="url(#ga11)"/><path d="M-5.3 .6Q0 -2.1 5.3 .4" fill="none" stroke="#20110a" stroke-width="1.3"/></g><g transform="translate(96.7 128.3)rotate(32)"><ellipse rx="8.7" ry="6.1" fill="url(#ga10)"/><path d="M-6.1 .6Q0 -2.4 6.1 .4" fill="none" stroke="#20110a" stroke-width="1.3"/></g><g transform="translate(172.6 33.5)rotate(174)"><ellipse rx="8" ry="5.4" fill="url(#ga12)"/></g><g transform="translate(93.8 52.2)rotate(52)"><ellipse rx="8.7" ry="5.7" fill="url(#ga13)"/><path d="M-6.1 .6Q0 -2.3 6.1 .4" fill="none" stroke="#20110a" stroke-width="1.3"/></g><g transform="translate(113.9 140.4)rotate(88)"><ellipse rx="7.6" ry="4.8" fill="url(#ga10)"/><path d="M-5.3 .6Q0 -1.9 5.3 .4" fill="none" stroke="#20110a" stroke-width="1.3"/></g><g transform="translate(147.8 69.7)rotate(19)"><ellipse rx="6.6" ry="4.5" fill="url(#ga12)"/></g><g transform="translate(111.6 100.6)rotate(24)"><ellipse rx="7.8" ry="5.2" fill="url(#ga12)"/></g><g transform="translate(92.7 114.5)rotate(169)"><ellipse rx="7.9" ry="5.1" fill="url(#ga11)"/></g><g transform="translate(153.3 64.6)rotate(26)"><ellipse rx="7.9" ry="5" fill="url(#ga12)"/><path d="M-5.5 .6Q0 -2 5.5 .4" fill="none" stroke="#20110a" stroke-width="1.3"/></g><g transform="translate(145.8 32.9)rotate(116)"><ellipse rx="7.3" ry="4.6" fill="url(#ga12)"/></g><g transform="translate(163.3 138.6)rotate(93)"><ellipse rx="8.2" ry="6" fill="url(#ga13)"/><path d="M-5.8 .6Q0 -2.4 5.8 .4" fill="none" stroke="#20110a" stroke-width="1.3"/></g><g transform="translate(174.9 101.4)rotate(96)"><ellipse rx="9.1" ry="5.7" fill="url(#ga13)"/><path d="M-6.4 .6Q0 -2.3 6.4 .4" fill="none" stroke="#20110a" stroke-width="1.3"/></g><g transform="translate(131.8 129.9)rotate(19)"><ellipse rx="7" ry="5.5" fill="url(#ga11)"/><path d="M-4.9 .6Q0 -2.2 4.9 .4" fill="none" stroke="#20110a" stroke-width="1.3"/></g><g transform="translate(148.8 52.6)rotate(91)"><ellipse rx="7.2" ry="5.2" fill="url(#ga13)"/></g><g transform="translate(124.8 140.6)rotate(54)"><ellipse rx="7.1" ry="4.8" fill="url(#ga10)"/></g><g transform="translate(129.3 99)rotate(97)"><ellipse rx="8.6" ry="6.1" fill="url(#ga13)"/></g><g transform="translate(161.6 123.4)rotate(134)"><ellipse rx="8.7" ry="6.1" fill="url(#ga13)"/><path d="M-6.1 .6Q0 -2.4 6.1 .4" fill="none" stroke="#20110a" stroke-width="1.3"/></g><g transform="translate(149.5 39.9)rotate(116)"><ellipse rx="9.4" ry="6.3" fill="url(#ga10)"/><path d="M-6.6 .6Q0 -2.5 6.6 .4" fill="none" stroke="#20110a" stroke-width="1.3"/></g><g transform="translate(129.3 122.4)rotate(152)"><ellipse rx="8.7" ry="6.5" fill="url(#ga10)"/><path d="M-6.1 .6Q0 -2.6 6.1 .4" fill="none" stroke="#20110a" stroke-width="1.3"/></g><g transform="translate(94.9 69.5)rotate(142)"><ellipse rx="8.2" ry="5.7" fill="url(#ga12)"/><path d="M-5.7 .6Q0 -2.3 5.7 .4" fill="none" stroke="#20110a" stroke-width="1.3"/></g><g transform="translate(161.6 129.4)rotate(15)"><ellipse rx="9.2" ry="7.2" fill="url(#ga10)"/><path d="M-6.4 .6Q0 -2.9 6.4 .4" fill="none" stroke="#20110a" stroke-width="1.3"/></g><g transform="translate(150.8 120)rotate(36)"><ellipse rx="9.1" ry="7" fill="url(#ga11)"/></g><g transform="translate(159.8 90.8)rotate(59)"><ellipse rx="7.5" ry="5.9" fill="url(#ga11)"/><path d="M-5.3 .6Q0 -2.3 5.3 .4" fill="none" stroke="#20110a" stroke-width="1.3"/></g><g transform="translate(120.3 48.2)rotate(177)"><ellipse rx="9" ry="7.1" fill="url(#ga13)"/></g><g transform="translate(126.1 62.8)rotate(5)"><ellipse rx="8.1" ry="5" fill="url(#ga11)"/></g><g transform="translate(174.5 109.9)rotate(112)"><ellipse rx="7.5" ry="4.9" fill="url(#ga10)"/></g><g transform="translate(111.2 81)rotate(20)"><ellipse rx="7.1" ry="4.4" fill="url(#ga11)"/><path d="M-5 .6Q0 -1.8 5 .4" fill="none" stroke="#20110a" stroke-width="1.3"/></g><g transform="translate(181 122.5)rotate(7)"><ellipse rx="7" ry="4.4" fill="url(#ga10)"/></g><g transform="translate(112 120)rotate(106)"><ellipse rx="8.7" ry="5.5" fill="url(#ga12)"/><path d="M-6.1 .6Q0 -2.2 6.1 .4" fill="none" stroke="#20110a" stroke-width="1.3"/></g><g transform="translate(127.3 84.7)rotate(120)"><ellipse rx="9.3" ry="6.6" fill="url(#ga13)"/><path d="M-6.5 .6Q0 -2.7 6.5 .4" fill="none" stroke="#20110a" stroke-width="1.3"/></g><g transform="translate(105.8 49.7)rotate(6)"><ellipse rx="7.2" ry="4.6" fill="url(#ga10)"/></g><g transform="translate(119.6 69.5)rotate(18)"><ellipse rx="8.4" ry="5.6" fill="url(#ga10)"/></g><g transform="translate(122.4 108.3)rotate(61)"><ellipse rx="8.4" ry="5.7" fill="url(#ga12)"/><path d="M-5.9 .6Q0 -2.3 5.9 .4" fill="none" stroke="#20110a" stroke-width="1.3"/></g><g transform="translate(145.1 131.6)rotate(129)"><ellipse rx="7.3" ry="4.9" fill="url(#ga12)"/></g><g transform="translate(131.2 51.3)rotate(86)"><ellipse rx="8.8" ry="6.4" fill="url(#ga12)"/></g><g transform="translate(108.7 73.3)rotate(79)"><ellipse rx="6.7" ry="4.6" fill="url(#ga10)"/><path d="M-4.7 .6Q0 -1.9 4.7 .4" fill="none" stroke="#20110a" stroke-width="1.3"/></g><g transform="translate(111.8 58.3)rotate(39)"><ellipse rx="8.6" ry="6.1" fill="url(#ga10)"/></g><g transform="translate(104.5 110.6)rotate(94)"><ellipse rx="7.4" ry="5.2" fill="url(#ga12)"/></g><g transform="translate(101.8 124.4)rotate(88)"><ellipse rx="9.3" ry="5.8" fill="url(#ga13)"/></g><g transform="translate(151.1 103.9)rotate(107)"><ellipse rx="8.9" ry="7.1" fill="url(#ga12)"/></g><g transform="translate(166.1 43)rotate(169)"><ellipse rx="7" ry="5.4" fill="url(#ga11)"/></g><g transform="translate(163.2 58.3)rotate(15)"><ellipse rx="6.9" ry="5.1" fill="url(#ga10)"/></g><g transform="translate(140.1 40.2)rotate(71)"><ellipse rx="7.6" ry="5.3" fill="url(#ga10)"/><path d="M-5.3 .6Q0 -2.1 5.3 .4" fill="none" stroke="#20110a" stroke-width="1.3"/></g><g transform="translate(156.7 73.4)rotate(55)"><ellipse rx="8.4" ry="5.8" fill="url(#ga13)"/></g><g transform="translate(124.2 44.5)rotate(159)"><ellipse rx="8" ry="5.5" fill="url(#ga11)"/></g><g transform="translate(175.4 38.6)rotate(124)"><ellipse rx="7" ry="5.1" fill="url(#ga10)"/><path d="M-4.9 .6Q0 -2 4.9 .4" fill="none" stroke="#20110a" stroke-width="1.3"/></g><g transform="translate(167.4 101.1)rotate(152)"><ellipse rx="7.5" ry="4.9" fill="url(#ga12)"/><path d="M-5.3 .6Q0 -1.9 5.3 .4" fill="none" stroke="#20110a" stroke-width="1.3"/></g><g transform="translate(169.7 49.8)rotate(104)"><ellipse rx="7.8" ry="5.9" fill="url(#ga11)"/><path d="M-5.5 .6Q0 -2.4 5.5 .4" fill="none" stroke="#20110a" stroke-width="1.3"/></g><g transform="translate(175 80.9)rotate(91)"><ellipse rx="8.4" ry="6.3" fill="url(#ga12)"/><path d="M-5.9 .6Q0 -2.5 5.9 .4" fill="none" stroke="#20110a" stroke-width="1.3"/></g></g></g><g clip-path="url(#ca2)"><g filter="url(#bla)"><rect x="178.6" y="27.6" width="90.3" height="161.8" fill="#160d09"/><g transform="translate(217.5 133.9)rotate(91)"><ellipse rx="8.9" ry="6.2" fill="url(#ga22)"/></g><g transform="translate(260.5 128.2)rotate(89)"><ellipse rx="7.6" ry="5" fill="url(#ga20)"/><path d="M-5.3 .6Q0 -2 5.3 .4" fill="none" stroke="#140b08" stroke-width="1.3"/></g><g transform="translate(211.3 139.1)rotate(106)"><ellipse rx="7.5" ry="5" fill="url(#ga20)"/></g><g transform="translate(203.6 120)rotate(159)"><ellipse rx="6.7" ry="5" fill="url(#ga20)"/><path d="M-4.7 .6Q0 -2 4.7 .4" fill="none" stroke="#140b08" stroke-width="1.3"/></g><g transform="translate(212.2 103.3)rotate(148)"><ellipse rx="6.9" ry="4.3" fill="url(#ga23)"/></g><g transform="translate(208.5 71)rotate(164)"><ellipse rx="8.4" ry="6.4" fill="url(#ga23)"/></g><g transform="translate(239 139.2)rotate(107)"><ellipse rx="8.4" ry="6.2" fill="url(#ga20)"/><path d="M-5.8 .6Q0 -2.5 5.8 .4" fill="none" stroke="#140b08" stroke-width="1.3"/></g><g transform="translate(226.6 119.4)rotate(137)"><ellipse rx="8.5" ry="5.9" fill="url(#ga20)"/></g><g transform="translate(249.9 33.2)rotate(18)"><ellipse rx="9" ry="6.3" fill="url(#ga20)"/><path d="M-6.3 .6Q0 -2.5 6.3 .4" fill="none" stroke="#140b08" stroke-width="1.3"/></g><g transform="translate(253.2 82.6)rotate(101)"><ellipse rx="8.9" ry="6.8" fill="url(#ga22)"/></g><g transform="translate(231.4 72.7)rotate(4)"><ellipse rx="7.1" ry="4.5" fill="url(#ga20)"/></g><g transform="translate(192.6 92.9)rotate(139)"><ellipse rx="8.1" ry="6.2" fill="url(#ga23)"/></g><g transform="translate(232.6 88.5)rotate(3)"><ellipse rx="9.2" ry="6.4" fill="url(#ga23)"/></g><g transform="translate(204.5 43.7)rotate(28)"><ellipse rx="9.4" ry="6.9" fill="url(#ga23)"/></g><g transform="translate(252.3 38.3)rotate(161)"><ellipse rx="6.8" ry="4.8" fill="url(#ga20)"/><path d="M-4.8 .6Q0 -1.9 4.8 .4" fill="none" stroke="#140b08" stroke-width="1.3"/></g><g transform="translate(182.5 69.9)rotate(178)"><ellipse rx="6.6" ry="4.9" fill="url(#ga20)"/><path d="M-4.6 .6Q0 -2 4.6 .4" fill="none" stroke="#140b08" stroke-width="1.3"/></g><g transform="translate(247.1 53.3)rotate(50)"><ellipse rx="6.9" ry="4.9" fill="url(#ga21)"/></g><g transform="translate(217.2 81.7)rotate(66)"><ellipse rx="8.7" ry="6.8" fill="url(#ga21)"/></g><g transform="translate(220.8 29.2)rotate(128)"><ellipse rx="6.8" ry="5" fill="url(#ga23)"/></g><g transform="translate(200.1 100)rotate(9)"><ellipse rx="9.1" ry="7.1" fill="url(#ga20)"/><path d="M-6.4 .6Q0 -2.9 6.4 .4" fill="none" stroke="#140b08" stroke-width="1.3"/></g><g transform="translate(240.4 83.1)rotate(147)"><ellipse rx="6.6" ry="4.9" fill="url(#ga20)"/><path d="M-4.6 .6Q0 -2 4.6 .4" fill="none" stroke="#140b08" stroke-width="1.3"/></g><g transform="translate(187.5 103)rotate(172)"><ellipse rx="7.5" ry="5.4" fill="url(#ga23)"/></g><g transform="translate(265.4 43.6)rotate(131)"><ellipse rx="7.5" ry="5.9" fill="url(#ga23)"/></g><g transform="translate(203 63)rotate(65)"><ellipse rx="7" ry="5.3" fill="url(#ga21)"/></g><g transform="translate(218 95)rotate(142)"><ellipse rx="7.8" ry="5.4" fill="url(#ga22)"/></g><g transform="translate(252.3 99.6)rotate(11)"><ellipse rx="8.2" ry="5.5" fill="url(#ga22)"/></g><g transform="translate(264.7 121.5)rotate(27)"><ellipse rx="8.6" ry="5.4" fill="url(#ga22)"/></g><g transform="translate(228.1 61.3)rotate(70)"><ellipse rx="9.3" ry="6.2" fill="url(#ga23)"/></g><g transform="translate(230.2 101.8)rotate(51)"><ellipse rx="9.1" ry="7" fill="url(#ga20)"/><path d="M-6.4 .6Q0 -2.8 6.4 .4" fill="none" stroke="#140b08" stroke-width="1.3"/></g><g transform="translate(213.2 119.9)rotate(166)"><ellipse rx="7.4" ry="4.8" fill="url(#ga20)"/><path d="M-5.1 .6Q0 -1.9 5.1 .4" fill="none" stroke="#140b08" stroke-width="1.3"/></g><g transform="translate(205.1 52.3)rotate(179)"><ellipse rx="7" ry="5.5" fill="url(#ga21)"/><path d="M-4.9 .6Q0 -2.2 4.9 .4" fill="none" stroke="#140b08" stroke-width="1.3"/></g><g transform="translate(256.8 34.8)rotate(123)"><ellipse rx="9" ry="6.9" fill="url(#ga23)"/><path d="M-6.3 .6Q0 -2.7 6.3 .4" fill="none" stroke="#140b08" stroke-width="1.3"/></g><g transform="translate(189.7 64.3)rotate(144)"><ellipse rx="6.8" ry="4.9" fill="url(#ga21)"/></g><g transform="translate(205.8 30.4)rotate(56)"><ellipse rx="8.6" ry="6.9" fill="url(#ga20)"/></g><g transform="translate(184.9 81.9)rotate(46)"><ellipse rx="7.9" ry="5.2" fill="url(#ga20)"/></g><g transform="translate(192.2 29.2)rotate(145)"><ellipse rx="7.9" ry="5" fill="url(#ga20)"/><path d="M-5.5 .6Q0 -2 5.5 .4" fill="none" stroke="#140b08" stroke-width="1.3"/></g><g transform="translate(268.4 81.8)rotate(159)"><ellipse rx="8.2" ry="6.4" fill="url(#ga22)"/></g><g transform="translate(255.9 143.6)rotate(35)"><ellipse rx="8.3" ry="5.4" fill="url(#ga21)"/></g><g transform="translate(232.4 29.4)rotate(65)"><ellipse rx="7.4" ry="5.4" fill="url(#ga21)"/><path d="M-5.2 .6Q0 -2.1 5.2 .4" fill="none" stroke="#140b08" stroke-width="1.3"/></g><g transform="translate(250.3 61)rotate(156)"><ellipse rx="9.2" ry="6.5" fill="url(#ga22)"/></g><g transform="translate(263.8 144.3)rotate(107)"><ellipse rx="8.8" ry="5.7" fill="url(#ga22)"/><path d="M-6.2 .6Q0 -2.3 6.2 .4" fill="none" stroke="#140b08" stroke-width="1.3"/></g><g transform="translate(216.6 62.9)rotate(37)"><ellipse rx="8.3" ry="5.3" fill="url(#ga23)"/></g><g transform="translate(256.2 91)rotate(50)"><ellipse rx="7.2" ry="5.7" fill="url(#ga20)"/></g><g transform="translate(236.5 51.1)rotate(173)"><ellipse rx="8.7" ry="6.7" fill="url(#ga22)"/></g><g transform="translate(181 94.7)rotate(68)"><ellipse rx="7.5" ry="6" fill="url(#ga20)"/><path d="M-5.3 .6Q0 -2.4 5.3 .4" fill="none" stroke="#140b08" stroke-width="1.3"/></g><g transform="translate(236.4 133.6)rotate(82)"><ellipse rx="8.2" ry="6.3" fill="url(#ga20)"/></g><g transform="translate(198.7 83.6)rotate(127)"><ellipse rx="8.4" ry="6.6" fill="url(#ga20)"/><path d="M-5.9 .6Q0 -2.6 5.9 .4" fill="none" stroke="#140b08" stroke-width="1.3"/></g><g transform="translate(219.6 112.6)rotate(172)"><ellipse rx="8.2" ry="6" fill="url(#ga23)"/><path d="M-5.7 .6Q0 -2.4 5.7 .4" fill="none" stroke="#140b08" stroke-width="1.3"/></g><g transform="translate(259.9 109)rotate(42)"><ellipse rx="9" ry="6.2" fill="url(#ga21)"/><path d="M-6.3 .6Q0 -2.5 6.3 .4" fill="none" stroke="#140b08" stroke-width="1.3"/></g><g transform="translate(259 49.7)rotate(11)"><ellipse rx="9.2" ry="7.3" fill="url(#ga20)"/></g><g transform="translate(263.5 103.5)rotate(128)"><ellipse rx="6.7" ry="5.1" fill="url(#ga23)"/><path d="M-4.7 .6Q0 -2.1 4.7 .4" fill="none" stroke="#140b08" stroke-width="1.3"/></g><g transform="translate(183 34)rotate(169)"><ellipse rx="7" ry="5.3" fill="url(#ga22)"/></g><g transform="translate(245 90.9)rotate(85)"><ellipse rx="7.8" ry="5.8" fill="url(#ga22)"/><path d="M-5.5 .6Q0 -2.3 5.5 .4" fill="none" stroke="#140b08" stroke-width="1.3"/></g><g transform="translate(225.2 143.5)rotate(30)"><ellipse rx="6.9" ry="4.9" fill="url(#ga21)"/></g><g transform="translate(259.5 74.9)rotate(84)"><ellipse rx="9.2" ry="7.2" fill="url(#ga21)"/></g><g transform="translate(244.1 133.9)rotate(14)"><ellipse rx="7" ry="5.4" fill="url(#ga22)"/></g><g transform="translate(205.7 114.8)rotate(17)"><ellipse rx="7" ry="4.9" fill="url(#ga23)"/></g><g transform="translate(210.6 134.1)rotate(61)"><ellipse rx="8.4" ry="5.9" fill="url(#ga21)"/></g><g transform="translate(221.8 74.6)rotate(40)"><ellipse rx="8.4" ry="5.4" fill="url(#ga20)"/><path d="M-5.9 .6Q0 -2.2 5.9 .4" fill="none" stroke="#140b08" stroke-width="1.3"/></g><g transform="translate(206.8 93.4)rotate(79)"><ellipse rx="7.9" ry="6.1" fill="url(#ga21)"/><path d="M-5.5 .6Q0 -2.5 5.5 .4" fill="none" stroke="#140b08" stroke-width="1.3"/></g><g transform="translate(215.7 41.1)rotate(49)"><ellipse rx="7.8" ry="5" fill="url(#ga22)"/><path d="M-5.4 .6Q0 -2 5.4 .4" fill="none" stroke="#140b08" stroke-width="1.3"/></g><g transform="translate(194.4 112)rotate(57)"><ellipse rx="7.1" ry="5" fill="url(#ga23)"/><path d="M-4.9 .6Q0 -2 4.9 .4" fill="none" stroke="#140b08" stroke-width="1.3"/></g><g transform="translate(251.6 119.8)rotate(161)"><ellipse rx="9.3" ry="5.9" fill="url(#ga21)"/></g><g transform="translate(246.4 110.2)rotate(136)"><ellipse rx="8.9" ry="5.7" fill="url(#ga22)"/><path d="M-6.3 .6Q0 -2.3 6.3 .4" fill="none" stroke="#140b08" stroke-width="1.3"/></g><g transform="translate(185.3 40.8)rotate(43)"><ellipse rx="7.3" ry="4.9" fill="url(#ga23)"/><path d="M-5.1 .6Q0 -1.9 5.1 .4" fill="none" stroke="#140b08" stroke-width="1.3"/></g><g transform="translate(202.2 139.9)rotate(131)"><ellipse rx="9.1" ry="5.7" fill="url(#ga22)"/><path d="M-6.4 .6Q0 -2.3 6.4 .4" fill="none" stroke="#140b08" stroke-width="1.3"/></g><g transform="translate(235.8 113.8)rotate(91)"><ellipse rx="8.4" ry="5.9" fill="url(#ga21)"/><path d="M-5.9 .6Q0 -2.3 5.9 .4" fill="none" stroke="#140b08" stroke-width="1.3"/></g><g transform="translate(219.9 53.3)rotate(52)"><ellipse rx="8.8" ry="7" fill="url(#ga22)"/><path d="M-6.2 .6Q0 -2.8 6.2 .4" fill="none" stroke="#140b08" stroke-width="1.3"/></g><g transform="translate(194.1 71.3)rotate(103)"><ellipse rx="9.2" ry="6" fill="url(#ga21)"/></g><g transform="translate(238.1 103.7)rotate(32)"><ellipse rx="8.1" ry="5.3" fill="url(#ga20)"/></g><g transform="translate(248.5 70.8)rotate(137)"><ellipse rx="9.1" ry="6.8" fill="url(#ga21)"/><path d="M-6.4 .6Q0 -2.7 6.4 .4" fill="none" stroke="#140b08" stroke-width="1.3"/></g><g transform="translate(195.5 51.3)rotate(146)"><ellipse rx="8.3" ry="6.2" fill="url(#ga22)"/><path d="M-5.8 .6Q0 -2.5 5.8 .4" fill="none" stroke="#140b08" stroke-width="1.3"/></g><g transform="translate(195.7 130.6)rotate(73)"><ellipse rx="6.8" ry="5.1" fill="url(#ga20)"/></g><g transform="translate(183 51.6)rotate(115)"><ellipse rx="7.6" ry="5.1" fill="url(#ga23)"/><path d="M-5.3 .6Q0 -2 5.3 .4" fill="none" stroke="#140b08" stroke-width="1.3"/></g><g transform="translate(183.8 112.5)rotate(24)"><ellipse rx="7.7" ry="5.9" fill="url(#ga22)"/><path d="M-5.4 .6Q0 -2.3 5.4 .4" fill="none" stroke="#140b08" stroke-width="1.3"/></g><g transform="translate(225 42.6)rotate(7)"><ellipse rx="8.2" ry="6.5" fill="url(#ga22)"/></g><g transform="translate(236.6 123.2)rotate(168)"><ellipse rx="9" ry="6.2" fill="url(#ga20)"/><path d="M-6.3 .6Q0 -2.5 6.3 .4" fill="none" stroke="#140b08" stroke-width="1.3"/></g><g transform="translate(268.1 63.1)rotate(156)"><ellipse rx="8.6" ry="6.6" fill="url(#ga22)"/></g><g transform="translate(190.4 120.6)rotate(162)"><ellipse rx="9" ry="6.5" fill="url(#ga22)"/></g><g transform="translate(238.8 62.5)rotate(92)"><ellipse rx="9.3" ry="6.6" fill="url(#ga21)"/><path d="M-6.5 .6Q0 -2.6 6.5 .4" fill="none" stroke="#140b08" stroke-width="1.3"/></g><g transform="translate(224.3 82.1)rotate(33)"><ellipse rx="9.3" ry="6.1" fill="url(#ga20)"/><path d="M-6.5 .6Q0 -2.5 6.5 .4" fill="none" stroke="#140b08" stroke-width="1.3"/></g><g transform="translate(181.1 132.6)rotate(4)"><ellipse rx="8.2" ry="6.5" fill="url(#ga21)"/><path d="M-5.7 .6Q0 -2.6 5.7 .4" fill="none" stroke="#140b08" stroke-width="1.3"/></g><g transform="translate(237.3 39.5)rotate(84)"><ellipse rx="8.9" ry="6.6" fill="url(#ga21)"/></g><g transform="translate(184.7 144.8)rotate(129)"><ellipse rx="6.9" ry="5.3" fill="url(#ga20)"/><path d="M-4.8 .6Q0 -2.1 4.8 .4" fill="none" stroke="#140b08" stroke-width="1.3"/></g></g></g><g clip-path="url(#ca3)"><g filter="url(#bla)"><rect x="267.8" y="27.6" width="87.2" height="161.8" fill="#100a09"/><g transform="translate(314.7 104.2)rotate(1)"><ellipse rx="7.5" ry="5.6" fill="url(#ga32)"/><path d="M-5.2 .6Q0 -2.2 5.2 .4" fill="none" stroke="#0b0706" stroke-width="1.3"/></g><g transform="translate(294.2 68.2)rotate(5)"><ellipse rx="6.9" ry="4.3" fill="url(#ga31)"/></g><g transform="translate(272.2 89.7)rotate(116)"><ellipse rx="8.1" ry="5.4" fill="url(#ga31)"/></g><g transform="translate(333.1 49.4)rotate(28)"><ellipse rx="7.8" ry="5" fill="url(#ga30)"/><path d="M-5.4 .6Q0 -2 5.4 .4" fill="none" stroke="#0b0706" stroke-width="1.3"/></g><g transform="translate(295.9 94.3)rotate(88)"><ellipse rx="6.8" ry="5.4" fill="url(#ga33)"/></g><g transform="translate(278.2 43)rotate(2)"><ellipse rx="8.9" ry="5.6" fill="url(#ga32)"/><path d="M-6.2 .6Q0 -2.2 6.2 .4" fill="none" stroke="#0b0706" stroke-width="1.3"/></g><g transform="translate(306.7 140.8)rotate(6)"><ellipse rx="7.3" ry="4.9" fill="url(#ga30)"/></g><g transform="translate(323.9 48.2)rotate(34)"><ellipse rx="9.3" ry="5.8" fill="url(#ga33)"/><path d="M-6.5 .6Q0 -2.3 6.5 .4" fill="none" stroke="#0b0706" stroke-width="1.3"/></g><g transform="translate(286.8 143.3)rotate(138)"><ellipse rx="7.2" ry="5" fill="url(#ga30)"/><path d="M-5.1 .6Q0 -2 5.1 .4" fill="none" stroke="#0b0706" stroke-width="1.3"/></g><g transform="translate(308.8 54.2)rotate(8)"><ellipse rx="8.3" ry="5.5" fill="url(#ga31)"/><path d="M-5.8 .6Q0 -2.2 5.8 .4" fill="none" stroke="#0b0706" stroke-width="1.3"/></g><g transform="translate(271.9 111.7)rotate(55)"><ellipse rx="9.1" ry="7" fill="url(#ga32)"/></g><g transform="translate(280.6 68.8)rotate(44)"><ellipse rx="8" ry="6.3" fill="url(#ga33)"/></g><g transform="translate(284.2 50.4)rotate(72)"><ellipse rx="8.2" ry="5.7" fill="url(#ga33)"/><path d="M-5.8 .6Q0 -2.3 5.8 .4" fill="none" stroke="#0b0706" stroke-width="1.3"/></g><g transform="translate(313.1 65)rotate(31)"><ellipse rx="9" ry="5.7" fill="url(#ga33)"/><path d="M-6.3 .6Q0 -2.3 6.3 .4" fill="none" stroke="#0b0706" stroke-width="1.3"/></g><g transform="translate(291 42.3)rotate(101)"><ellipse rx="9.3" ry="6.3" fill="url(#ga30)"/><path d="M-6.5 .6Q0 -2.5 6.5 .4" fill="none" stroke="#0b0706" stroke-width="1.3"/></g><g transform="translate(302.1 100.4)rotate(117)"><ellipse rx="9" ry="6.2" fill="url(#ga30)"/><path d="M-6.3 .6Q0 -2.5 6.3 .4" fill="none" stroke="#0b0706" stroke-width="1.3"/></g><g transform="translate(298.6 111.7)rotate(70)"><ellipse rx="9.2" ry="6.6" fill="url(#ga33)"/><path d="M-6.4 .6Q0 -2.6 6.4 .4" fill="none" stroke="#0b0706" stroke-width="1.3"/></g><g transform="translate(349.1 94.9)rotate(120)"><ellipse rx="7.3" ry="4.5" fill="url(#ga32)"/></g><g transform="translate(268.1 130.9)rotate(35)"><ellipse rx="7.3" ry="4.7" fill="url(#ga31)"/></g><g transform="translate(355.8 45)rotate(43)"><ellipse rx="7.9" ry="6" fill="url(#ga32)"/><path d="M-5.5 .6Q0 -2.4 5.5 .4" fill="none" stroke="#0b0706" stroke-width="1.3"/></g><g transform="translate(325.8 111)rotate(173)"><ellipse rx="8.6" ry="5.9" fill="url(#ga31)"/><path d="M-6 .6Q0 -2.4 6 .4" fill="none" stroke="#0b0706" stroke-width="1.3"/></g><g transform="translate(308.4 91.4)rotate(155)"><ellipse rx="7.9" ry="5.2" fill="url(#ga31)"/></g><g transform="translate(358.2 62.5)rotate(79)"><ellipse rx="9.4" ry="6.8" fill="url(#ga32)"/></g><g transform="translate(344 83.3)rotate(23)"><ellipse rx="7.7" ry="5.5" fill="url(#ga30)"/></g><g transform="translate(357.6 140.4)rotate(132)"><ellipse rx="6.9" ry="5.3" fill="url(#ga33)"/><path d="M-4.8 .6Q0 -2.1 4.8 .4" fill="none" stroke="#0b0706" stroke-width="1.3"/></g><g transform="translate(352 74.5)rotate(3)"><ellipse rx="8.6" ry="5.6" fill="url(#ga30)"/></g><g transform="translate(294.3 52.9)rotate(34)"><ellipse rx="8.8" ry="5.8" fill="url(#ga30)"/><path d="M-6.1 .6Q0 -2.3 6.1 .4" fill="none" stroke="#0b0706" stroke-width="1.3"/></g><g transform="translate(306.3 125.1)rotate(137)"><ellipse rx="9.2" ry="7" fill="url(#ga31)"/><path d="M-6.4 .6Q0 -2.8 6.4 .4" fill="none" stroke="#0b0706" stroke-width="1.3"/></g><g transform="translate(325 88.3)rotate(23)"><ellipse rx="7.5" ry="4.9" fill="url(#ga33)"/><path d="M-5.2 .6Q0 -2 5.2 .4" fill="none" stroke="#0b0706" stroke-width="1.3"/></g><g transform="translate(337 109.1)rotate(139)"><ellipse rx="7.7" ry="6.1" fill="url(#ga31)"/></g><g transform="translate(328.6 44)rotate(144)"><ellipse rx="7.1" ry="4.9" fill="url(#ga32)"/></g><g transform="translate(347.6 49.5)rotate(83)"><ellipse rx="6.7" ry="5" fill="url(#ga33)"/><path d="M-4.7 .6Q0 -2 4.7 .4" fill="none" stroke="#0b0706" stroke-width="1.3"/></g><g transform="translate(287.5 124.1)rotate(21)"><ellipse rx="8.4" ry="5.5" fill="url(#ga31)"/></g><g transform="translate(313.2 40.6)rotate(29)"><ellipse rx="6.7" ry="4.2" fill="url(#ga31)"/></g><g transform="translate(335.5 30.9)rotate(99)"><ellipse rx="7" ry="5.3" fill="url(#ga31)"/></g><g transform="translate(327.3 98.5)rotate(94)"><ellipse rx="7.2" ry="5.1" fill="url(#ga33)"/></g><g transform="translate(278.5 59.7)rotate(20)"><ellipse rx="8.2" ry="6.5" fill="url(#ga32)"/></g><g transform="translate(302.9 81.7)rotate(125)"><ellipse rx="9.1" ry="6.6" fill="url(#ga31)"/></g><g transform="translate(286.1 110.6)rotate(140)"><ellipse rx="6.7" ry="4.5" fill="url(#ga32)"/></g><g transform="translate(334.6 89.4)rotate(71)"><ellipse rx="6.8" ry="5.1" fill="url(#ga31)"/><path d="M-4.8 .6Q0 -2 4.8 .4" fill="none" stroke="#0b0706" stroke-width="1.3"/></g><g transform="translate(341.4 139.7)rotate(76)"><ellipse rx="6.9" ry="5.4" fill="url(#ga32)"/></g><g transform="translate(287.9 104.8)rotate(113)"><ellipse rx="8.7" ry="6.7" fill="url(#ga33)"/></g><g transform="translate(343.8 44)rotate(121)"><ellipse rx="8.5" ry="5.6" fill="url(#ga31)"/></g><g transform="translate(300.1 44.9)rotate(149)"><ellipse rx="7.1" ry="5.6" fill="url(#ga32)"/><path d="M-5 .6Q0 -2.3 5 .4" fill="none" stroke="#0b0706" stroke-width="1.3"/></g><g transform="translate(290.9 84.6)rotate(42)"><ellipse rx="7.1" ry="5.4" fill="url(#ga32)"/><path d="M-4.9 .6Q0 -2.1 4.9 .4" fill="none" stroke="#0b0706" stroke-width="1.3"/></g><g transform="translate(280.1 78.7)rotate(74)"><ellipse rx="6.8" ry="4.6" fill="url(#ga31)"/></g><g transform="translate(331.4 141.1)rotate(88)"><ellipse rx="7" ry="5.2" fill="url(#ga33)"/><path d="M-4.9 .6Q0 -2.1 4.9 .4" fill="none" stroke="#0b0706" stroke-width="1.3"/></g><g transform="translate(332.6 58.4)rotate(80)"><ellipse rx="7.3" ry="5.2" fill="url(#ga32)"/></g><g transform="translate(334.3 130.6)rotate(106)"><ellipse rx="7" ry="5.2" fill="url(#ga31)"/><path d="M-4.9 .6Q0 -2.1 4.9 .4" fill="none" stroke="#0b0706" stroke-width="1.3"/></g><g transform="translate(306.8 61.3)rotate(137)"><ellipse rx="8.9" ry="6.4" fill="url(#ga31)"/></g><g transform="translate(314.9 141.9)rotate(151)"><ellipse rx="7" ry="5.6" fill="url(#ga33)"/></g><g transform="translate(347.8 131.8)rotate(65)"><ellipse rx="6.9" ry="4.7" fill="url(#ga31)"/><path d="M-4.8 .6Q0 -1.9 4.8 .4" fill="none" stroke="#0b0706" stroke-width="1.3"/></g><g transform="translate(269.5 50.9)rotate(20)"><ellipse rx="9.1" ry="6.1" fill="url(#ga32)"/><path d="M-6.4 .6Q0 -2.5 6.4 .4" fill="none" stroke="#0b0706" stroke-width="1.3"/></g><g transform="translate(333.5 68.5)rotate(84)"><ellipse rx="6.9" ry="4.7" fill="url(#ga32)"/><path d="M-4.8 .6Q0 -1.9 4.8 .4" fill="none" stroke="#0b0706" stroke-width="1.3"/></g><g transform="translate(320.9 32.8)rotate(84)"><ellipse rx="8.2" ry="5.1" fill="url(#ga33)"/><path d="M-5.7 .6Q0 -2.1 5.7 .4" fill="none" stroke="#0b0706" stroke-width="1.3"/></g><g transform="translate(310.6 128.9)rotate(101)"><ellipse rx="8.6" ry="6.9" fill="url(#ga30)"/></g><g transform="translate(270.6 32.2)rotate(141)"><ellipse rx="9.3" ry="6.6" fill="url(#ga32)"/><path d="M-6.5 .6Q0 -2.6 6.5 .4" fill="none" stroke="#0b0706" stroke-width="1.3"/></g><g transform="translate(271.7 73.7)rotate(113)"><ellipse rx="9.2" ry="6.8" fill="url(#ga32)"/></g><g transform="translate(346.7 112.4)rotate(5)"><ellipse rx="6.8" ry="5.1" fill="url(#ga33)"/></g><g transform="translate(283 91.9)rotate(115)"><ellipse rx="7.4" ry="4.9" fill="url(#ga31)"/><path d="M-5.2 .6Q0 -1.9 5.2 .4" fill="none" stroke="#0b0706" stroke-width="1.3"/></g><g transform="translate(325.3 132.9)rotate(111)"><ellipse rx="8.6" ry="5.8" fill="url(#ga33)"/><path d="M-6 .6Q0 -2.3 6 .4" fill="none" stroke="#0b0706" stroke-width="1.3"/></g><g transform="translate(294.2 34.3)rotate(66)"><ellipse rx="8.9" ry="6" fill="url(#ga32)"/></g><g transform="translate(289.7 60.9)rotate(19)"><ellipse rx="7.3" ry="4.6" fill="url(#ga33)"/></g><g transform="translate(313.2 112.8)rotate(90)"><ellipse rx="9.2" ry="6.6" fill="url(#ga31)"/></g><g transform="translate(276.6 104.6)rotate(26)"><ellipse rx="8.3" ry="6.1" fill="url(#ga31)"/><path d="M-5.8 .6Q0 -2.4 5.8 .4" fill="none" stroke="#0b0706" stroke-width="1.3"/></g><g transform="translate(354.7 121.9)rotate(16)"><ellipse rx="7.8" ry="6.2" fill="url(#ga30)"/></g><g transform="translate(330.2 123)rotate(67)"><ellipse rx="7.9" ry="5.2" fill="url(#ga30)"/></g><g transform="translate(314.7 122.5)rotate(77)"><ellipse rx="9" ry="6.9" fill="url(#ga32)"/><path d="M-6.3 .6Q0 -2.7 6.3 .4" fill="none" stroke="#0b0706" stroke-width="1.3"/></g><g transform="translate(356 100.5)rotate(160)"><ellipse rx="6.8" ry="5.1" fill="url(#ga30)"/><path d="M-4.7 .6Q0 -2 4.7 .4" fill="none" stroke="#0b0706" stroke-width="1.3"/></g><g transform="translate(287.3 129.1)rotate(163)"><ellipse rx="8.5" ry="6.5" fill="url(#ga31)"/><path d="M-5.9 .6Q0 -2.6 5.9 .4" fill="none" stroke="#0b0706" stroke-width="1.3"/></g><g transform="translate(329.8 80)rotate(122)"><ellipse rx="6.6" ry="5.1" fill="url(#ga31)"/></g><g transform="translate(341.7 118.8)rotate(77)"><ellipse rx="8.1" ry="5.8" fill="url(#ga31)"/></g><g transform="translate(319 84.5)rotate(146)"><ellipse rx="9.3" ry="6.8" fill="url(#ga30)"/></g><g transform="translate(275.7 124)rotate(102)"><ellipse rx="7.5" ry="5.6" fill="url(#ga33)"/></g><g transform="translate(299.2 130.1)rotate(54)"><ellipse rx="7.9" ry="5.9" fill="url(#ga32)"/></g><g transform="translate(320.1 70.5)rotate(40)"><ellipse rx="8.4" ry="6.5" fill="url(#ga33)"/></g><g transform="translate(351.9 28.2)rotate(100)"><ellipse rx="7" ry="5.1" fill="url(#ga33)"/><path d="M-4.9 .6Q0 -2 4.9 .4" fill="none" stroke="#0b0706" stroke-width="1.3"/></g><g transform="translate(310.1 29.7)rotate(47)"><ellipse rx="7.3" ry="5.1" fill="url(#ga31)"/><path d="M-5.1 .6Q0 -2 5.1 .4" fill="none" stroke="#0b0706" stroke-width="1.3"/></g><g transform="translate(285.6 28.9)rotate(20)"><ellipse rx="9.1" ry="6.5" fill="url(#ga32)"/></g><g transform="translate(339 102)rotate(128)"><ellipse rx="7.1" ry="5.3" fill="url(#ga31)"/></g><g transform="translate(344.9 62.4)rotate(20)"><ellipse rx="7.2" ry="5.2" fill="url(#ga30)"/></g><g transform="translate(353.8 81.3)rotate(24)"><ellipse rx="8.5" ry="6.5" fill="url(#ga30)"/></g><g transform="translate(308 68.4)rotate(83)"><ellipse rx="9.3" ry="6.6" fill="url(#ga33)"/></g><g transform="translate(278 142.6)rotate(86)"><ellipse rx="9.3" ry="6.1" fill="url(#ga30)"/><path d="M-6.5 .6Q0 -2.4 6.5 .4" fill="none" stroke="#0b0706" stroke-width="1.3"/></g></g></g></svg>
</section>
<aside>
<div class="card" style="left:935px;top:67px;width:380px;height:648px;border-radius:7px 0 0 7px;border-right:0"></div>
<div style="left:948px;top:76px;width:347px;height:632px;border:3px solid #e60000"></div>
<div style="left:958px;top:89px;width:331px;height:604px;border:1px solid #c4c8dc;border-radius:8px;background:#fff"></div>
<div style="left:958px;top:89px;width:331px;height:58px;background:#d5ddf6;border-radius:8px 8px 0 0"></div>
<h3 class="t" style="left:973.00px;top:107.00px;font-size:16.2px;color:#1f2430;letter-spacing:0.070px;font-weight:400;-webkit-text-stroke:0.3px #1f2430;">Test Articles</h3>
<svg class="ic" style="left:1214px;top:111.8px;" width="14" height="12.6" viewBox="0 0 14 12.6"><path d="M0.7 0.7H13.3L8.4 6.6V11.9L5.6 10V6.6Z" stroke="#23419f" stroke-width="1.3"/></svg>
<span class="t" style="left:1236.00px;top:109.00px;font-size:11.1px;color:#23419f;font-weight:700;letter-spacing:0.135px;">Filter</span>
<div style="left:1133px;top:161px;width:148px;height:33px;border:1px solid #c4c8dc;border-radius:8px 2px 8px 8px;background:#fff"></div>
<span class="t g" style="left:1149.40px;top:168.00px;font-size:11.1px;color:#50545a;letter-spacing:0.164px;">picture of coffee roasts</span>
<div style="left:966px;top:201px;width:283px;height:344px;border:1px solid #c4c8dc;border-radius:2px 8px 8px 8px;background:#fff"></div>
<div style="left:1203.8px;top:215px;width:7px;height:7px;background:#0a6e4f;border-radius:50%"></div>
<span class="t g" style="left:1213.40px;top:209.00px;font-size:10.1px;color:#50545a;letter-spacing:-0.052px;">92%</span>
<p class="t g" style="left:981.40px;top:229.00px;font-size:11.1px;color:#50545a;letter-spacing:0.141px;">Most roasters have specialized names for their</p>
<p class="t g" style="left:981.40px;top:245.00px;font-size:11.1px;color:#50545a;letter-spacing:0.186px;">favored roasts and there is very little industry</p>
<p class="t g" style="left:981.40px;top:261.00px;font-size:11.1px;color:#50545a;letter-spacing:0.095px;">standardization. This can cause some confusion</p>
<p class="t g" style="left:981.40px;top:278.00px;font-size:11.1px;color:#50545a;letter-spacing:0.185px;">when you're buying, but in general, roasts fall</p>
<p class="t g" style="left:981.40px;top:294.00px;font-size:11.1px;color:#50545a;letter-spacing:0.192px;">into one of four color categories — </p>
<p class="t g" style="left:1160.80px;top:294.00px;font-size:11.1px;color:#50545a;font-weight:700;letter-spacing:0.340px;">light,</p>
<p class="t g" style="left:981.40px;top:310.00px;font-size:11.1px;color:#50545a;font-weight:700;letter-spacing:0.241px;">medium, medium-dark and dark</p>
<p class="t g" style="left:1155.60px;top:310.00px;font-size:11.1px;color:#50545a;">.</p>
<svg class="pic" style="left:991px;top:333.9612903225807px" width="230.64" height="162.71" viewBox="0 0 360.6 254.40" role="img" aria-label="Coffee roasts: light, medium, medium dark and dark"><defs><filter id="blb" x="-5%" y="-5%" width="110%" height="110%"><feGaussianBlur stdDeviation="0.45"/></filter><radialGradient id="gb00" cx="0.42" cy="0.36" r="0.62"><stop offset="0" stop-color="#c28150"/><stop offset="0.55" stop-color="#a66c40"/><stop offset="1" stop-color="#583218"/></radialGradient><radialGradient id="gb01" cx="0.42" cy="0.36" r="0.62"><stop offset="0" stop-color="#b27548"/><stop offset="0.55" stop-color="#986139"/><stop offset="1" stop-color="#583218"/></radialGradient><radialGradient id="gb02" cx="0.42" cy="0.36" r="0.62"><stop offset="0" stop-color="#9e653d"/><stop offset="0.55" stop-color="#86532f"/><stop offset="1" stop-color="#583218"/></radialGradient><radialGradient id="gb03" cx="0.42" cy="0.36" r="0.62"><stop offset="0" stop-color="#cd8e5c"/><stop offset="0.55" stop-color="#b0784b"/><stop offset="1" stop-color="#583218"/></radialGradient><clipPath id="cb0"><rect x="4.6" y="29.6" width="83.6" height="157.8" rx="2"/></clipPath><radialGradient id="gb10" cx="0.42" cy="0.36" r="0.62"><stop offset="0" stop-color="#835237"/><stop offset="0.55" stop-color="#6e422a"/><stop offset="1" stop-color="#2c180f"/></radialGradient><radialGradient id="gb11" cx="0.42" cy="0.36" r="0.62"><stop offset="0" stop-color="#744730"/><stop offset="0.55" stop-color="#603824"/><stop offset="1" stop-color="#2c180f"/></radialGradient><radialGradient id="gb12" cx="0.42" cy="0.36" r="0.62"><stop offset="0" stop-color="#623c2a"/><stop offset="0.55" stop-color="#502e1e"/><stop offset="1" stop-color="#2c180f"/></radialGradient><radialGradient id="gb13" cx="0.42" cy="0.36" r="0.62"><stop offset="0" stop-color="#935f42"/><stop offset="0.55" stop-color="#7c4e34"/><stop offset="1" stop-color="#2c180f"/></radialGradient><clipPath id="cb1"><rect x="92.6" y="29.6" width="85.3" height="157.8" rx="2"/></clipPath><radialGradient id="gb20" cx="0.42" cy="0.36" r="0.62"><stop offset="0" stop-color="#643f2f"/><stop offset="0.55" stop-color="#523123"/><stop offset="1" stop-color="#1e120d"/></radialGradient><radialGradient id="gb21" cx="0.42" cy="0.36" r="0.62"><stop offset="0" stop-color="#543527"/><stop offset="0.55" stop-color="#44281c"/><stop offset="1" stop-color="#1e120d"/></radialGradient><radialGradient id="gb22" cx="0.42" cy="0.36" r="0.62"><stop offset="0" stop-color="#462d23"/><stop offset="0.55" stop-color="#372118"/><stop offset="1" stop-color="#1e120d"/></radialGradient><radialGradient id="gb23" cx="0.42" cy="0.36" r="0.62"><stop offset="0" stop-color="#714a39"/><stop offset="0.55" stop-color="#5e3b2c"/><stop offset="1" stop-color="#1e120d"/></radialGradient><clipPath id="cb2"><rect x="180.6" y="29.6" width="86.3" height="157.8" rx="2"/></clipPath><radialGradient id="gb30" cx="0.42" cy="0.36" r="0.62"><stop offset="0" stop-color="#49342d"/><stop offset="0.55" stop-color="#3a2721"/><stop offset="1" stop-color="#160e0c"/></radialGradient><radialGradient id="gb31" cx="0.42" cy="0.36" r="0.62"><stop offset="0" stop-color="#3d2c27"/><stop offset="0.55" stop-color="#2f201c"/><stop offset="1" stop-color="#160e0c"/></radialGradient><radialGradient id="gb32" cx="0.42" cy="0.36" r="0.62"><stop offset="0" stop-color="#342623"/><stop offset="0.55" stop-color="#271b18"/><stop offset="1" stop-color="#160e0c"/></radialGradient><radialGradient id="gb33" cx="0.42" cy="0.36" r="0.62"><stop offset="0" stop-color="#564039"/><stop offset="0.55" stop-color="#46322c"/><stop offset="1" stop-color="#160e0c"/></radialGradient><clipPath id="cb3"><rect x="269.8" y="29.6" width="83.2" height="157.8" rx="2"/></clipPath></defs><g font-family="Liberation Serif, serif" font-size="9.6" fill="#1c1c1c" stroke="#222" stroke-width="0.25" text-anchor="middle"><text x="44.4" y="13">Light Roast</text><text x="134.0" y="13">Medium Roast</text><text x="222.4" y="13">Medium Dark Roast</text><text x="309.0" y="13">Dark Roast</text></g><rect x="0" y="23.2" width="359.6" height="169.2" rx="3" fill="#dddbd9"/><rect x="1.6" y="24.8" width="356.40000000000003" height="166.0" rx="2.5" fill="#d4d1ce" stroke="#e8e6e4" stroke-width="1.2"/><g clip-path="url(#cb0)"><g filter="url(#blb)"><rect x="2.5999999999999996" y="27.6" width="87.6" height="161.8" fill="#402412"/><g transform="translate(47.8 73.4)rotate(171)"><ellipse rx="9.2" ry="6.6" fill="url(#gb00)"/></g><g transform="translate(5.2 128.5)rotate(150)"><ellipse rx="7.8" ry="5.6" fill="url(#gb01)"/></g><g transform="translate(33.1 194.8)rotate(56)"><ellipse rx="9" ry="6.5" fill="url(#gb03)"/></g><g transform="translate(43 189.3)rotate(55)"><ellipse rx="9" ry="6.6" fill="url(#gb01)"/></g><g transform="translate(3.6 90.9)rotate(36)"><ellipse rx="8.1" ry="5.8" fill="url(#gb00)"/></g><g transform="translate(57 153.6)rotate(174)"><ellipse rx="8.3" ry="5.2" fill="url(#gb03)"/></g><g transform="translate(35.5 82.6)rotate(17)"><ellipse rx="9.4" ry="6" fill="url(#gb01)"/><path d="M-6.6 .6Q0 -2.4 6.6 .4" fill="none" stroke="#543016" stroke-width="1.3"/></g><g transform="translate(67.8 68.5)rotate(172)"><ellipse rx="8.1" ry="5.6" fill="url(#gb03)"/><path d="M-5.7 .6Q0 -2.3 5.7 .4" fill="none" stroke="#543016" stroke-width="1.3"/></g><g transform="translate(21.1 92.6)rotate(78)"><ellipse rx="7.9" ry="5.1" fill="url(#gb03)"/></g><g transform="translate(40.5 60.8)rotate(5)"><ellipse rx="6.9" ry="4.8" fill="url(#gb02)"/><path d="M-4.8 .6Q0 -1.9 4.8 .4" fill="none" stroke="#543016" stroke-width="1.3"/></g><g transform="translate(64.9 120.1)rotate(35)"><ellipse rx="8.8" ry="5.5" fill="url(#gb01)"/><path d="M-6.1 .6Q0 -2.2 6.1 .4" fill="none" stroke="#543016" stroke-width="1.3"/></g><g transform="translate(48.4 81)rotate(44)"><ellipse rx="7.4" ry="5.5" fill="url(#gb03)"/><path d="M-5.2 .6Q0 -2.2 5.2 .4" fill="none" stroke="#543016" stroke-width="1.3"/></g><g transform="translate(51.6 104.2)rotate(92)"><ellipse rx="8.6" ry="5.6" fill="url(#gb02)"/></g><g transform="translate(68.8 113)rotate(4)"><ellipse rx="8.6" ry="6.7" fill="url(#gb03)"/></g><g transform="translate(68.6 191)rotate(155)"><ellipse rx="8.3" ry="6" fill="url(#gb01)"/></g><g transform="translate(7.3 114.7)rotate(154)"><ellipse rx="9" ry="6.6" fill="url(#gb01)"/></g><g transform="translate(88.3 99.4)rotate(33)"><ellipse rx="8.4" ry="5.7" fill="url(#gb02)"/></g><g transform="translate(73.1 152.1)rotate(35)"><ellipse rx="7.1" ry="5.4" fill="url(#gb00)"/><path d="M-5 .6Q0 -2.2 5 .4" fill="none" stroke="#543016" stroke-width="1.3"/></g><g transform="translate(45.4 174.5)rotate(47)"><ellipse rx="7.3" ry="5.5" fill="url(#gb00)"/><path d="M-5.1 .6Q0 -2.2 5.1 .4" fill="none" stroke="#543016" stroke-width="1.3"/></g><g transform="translate(65.7 162.2)rotate(127)"><ellipse rx="9.2" ry="6.6" fill="url(#gb01)"/><path d="M-6.5 .6Q0 -2.7 6.5 .4" fill="none" stroke="#543016" stroke-width="1.3"/></g><g transform="translate(48.7 38.2)rotate(36)"><ellipse rx="8.5" ry="5.3" fill="url(#gb02)"/></g><g transform="translate(41.6 164.3)rotate(91)"><ellipse rx="9.3" ry="6" fill="url(#gb02)"/></g><g transform="translate(55.9 168.2)rotate(13)"><ellipse rx="8.5" ry="5.6" fill="url(#gb00)"/><path d="M-6 .6Q0 -2.2 6 .4" fill="none" stroke="#543016" stroke-width="1.3"/></g><g transform="translate(87.2 163.4)rotate(163)"><ellipse rx="8.7" ry="6.4" fill="url(#gb03)"/><path d="M-6.1 .6Q0 -2.6 6.1 .4" fill="none" stroke="#543016" stroke-width="1.3"/></g><g transform="translate(31.6 52.7)rotate(151)"><ellipse rx="7.1" ry="4.7" fill="url(#gb02)"/></g><g transform="translate(64.3 38.5)rotate(171)"><ellipse rx="6.9" ry="4.3" fill="url(#gb03)"/><path d="M-4.8 .6Q0 -1.7 4.8 .4" fill="none" stroke="#543016" stroke-width="1.3"/></g><g transform="translate(80.7 92.2)rotate(77)"><ellipse rx="6.9" ry="4.7" fill="url(#gb02)"/><path d="M-4.8 .6Q0 -1.9 4.8 .4" fill="none" stroke="#543016" stroke-width="1.3"/></g><g transform="translate(93.5 60.9)rotate(126)"><ellipse rx="8.3" ry="5.2" fill="url(#gb01)"/><path d="M-5.8 .6Q0 -2.1 5.8 .4" fill="none" stroke="#543016" stroke-width="1.3"/></g><g transform="translate(86.7 120)rotate(73)"><ellipse rx="7.9" ry="5.9" fill="url(#gb01)"/></g><g transform="translate(2.3 172.3)rotate(58)"><ellipse rx="6.9" ry="5.2" fill="url(#gb00)"/></g><g transform="translate(61.9 99.2)rotate(113)"><ellipse rx="8.6" ry="6.6" fill="url(#gb03)"/></g><g transform="translate(10.3 102.3)rotate(61)"><ellipse rx="7.1" ry="5.2" fill="url(#gb02)"/><path d="M-5 .6Q0 -2.1 5 .4" fill="none" stroke="#543016" stroke-width="1.3"/></g><g transform="translate(73 53.1)rotate(29)"><ellipse rx="6.9" ry="5.2" fill="url(#gb03)"/><path d="M-4.8 .6Q0 -2.1 4.8 .4" fill="none" stroke="#543016" stroke-width="1.3"/></g><g transform="translate(44.1 108.8)rotate(67)"><ellipse rx="7.5" ry="5.4" fill="url(#gb03)"/></g><g transform="translate(76.7 164)rotate(13)"><ellipse rx="7.7" ry="5.8" fill="url(#gb02)"/><path d="M-5.4 .6Q0 -2.3 5.4 .4" fill="none" stroke="#543016" stroke-width="1.3"/></g><g transform="translate(18.7 52.6)rotate(178)"><ellipse rx="6.9" ry="5.4" fill="url(#gb00)"/><path d="M-4.8 .6Q0 -2.1 4.8 .4" fill="none" stroke="#543016" stroke-width="1.3"/></g><g transform="translate(33 171.6)rotate(61)"><ellipse rx="9.2" ry="6.8" fill="url(#gb03)"/></g><g transform="translate(13.5 38.4)rotate(180)"><ellipse rx="8.1" ry="5.6" fill="url(#gb01)"/></g><g transform="translate(47.4 154.2)rotate(4)"><ellipse rx="8.7" ry="7" fill="url(#gb00)"/></g><g transform="translate(18.5 169.7)rotate(9)"><ellipse rx="7.3" ry="5.1" fill="url(#gb01)"/></g><g transform="translate(35.1 119.7)rotate(50)"><ellipse rx="6.6" ry="4.4" fill="url(#gb02)"/></g><g transform="translate(52.7 160.8)rotate(102)"><ellipse rx="8" ry="6.4" fill="url(#gb00)"/></g><g transform="translate(10.6 58.6)rotate(108)"><ellipse rx="8.9" ry="5.6" fill="url(#gb00)"/><path d="M-6.2 .6Q0 -2.2 6.2 .4" fill="none" stroke="#543016" stroke-width="1.3"/></g><g transform="translate(71.9 132.2)rotate(175)"><ellipse rx="9.2" ry="6.4" fill="url(#gb03)"/></g><g transform="translate(3.1 191.6)rotate(89)"><ellipse rx="8.3" ry="5.8" fill="url(#gb02)"/></g><g transform="translate(22.9 83.2)rotate(51)"><ellipse rx="8.3" ry="5.7" fill="url(#gb02)"/></g><g transform="translate(69.2 172.8)rotate(53)"><ellipse rx="7.4" ry="5.5" fill="url(#gb00)"/></g><g transform="translate(81.9 113.9)rotate(74)"><ellipse rx="8.2" ry="6" fill="url(#gb03)"/><path d="M-5.8 .6Q0 -2.4 5.8 .4" fill="none" stroke="#543016" stroke-width="1.3"/></g><g transform="translate(5.3 32)rotate(105)"><ellipse rx="7.5" ry="5.2" fill="url(#gb02)"/><path d="M-5.2 .6Q0 -2.1 5.2 .4" fill="none" stroke="#543016" stroke-width="1.3"/></g><g transform="translate(84.5 191.6)rotate(86)"><ellipse rx="9.1" ry="6.4" fill="url(#gb01)"/><path d="M-6.4 .6Q0 -2.5 6.4 .4" fill="none" stroke="#543016" stroke-width="1.3"/></g><g transform="translate(74.9 39.8)rotate(164)"><ellipse rx="6.9" ry="5.3" fill="url(#gb01)"/></g><g transform="translate(20.5 70)rotate(21)"><ellipse rx="8.9" ry="6.5" fill="url(#gb03)"/></g><g transform="translate(16.3 130.7)rotate(95)"><ellipse rx="7.2" ry="4.5" fill="url(#gb00)"/><path d="M-5 .6Q0 -1.8 5 .4" fill="none" stroke="#543016" stroke-width="1.3"/></g><g transform="translate(28.5 44.9)rotate(108)"><ellipse rx="7" ry="4.9" fill="url(#gb03)"/><path d="M-4.9 .6Q0 -1.9 4.9 .4" fill="none" stroke="#543016" stroke-width="1.3"/></g><g transform="translate(22.2 162.6)rotate(25)"><ellipse rx="8.7" ry="6.7" fill="url(#gb02)"/></g><g transform="translate(59.5 90.4)rotate(161)"><ellipse rx="7.3" ry="4.7" fill="url(#gb02)"/><path d="M-5.1 .6Q0 -1.9 5.1 .4" fill="none" stroke="#543016" stroke-width="1.3"/></g><g transform="translate(80 61.4)rotate(126)"><ellipse rx="8.3" ry="6.2" fill="url(#gb01)"/></g><g transform="translate(79.8 180.8)rotate(45)"><ellipse rx="8.7" ry="5.7" fill="url(#gb01)"/></g><g transform="translate(20.7 154.5)rotate(49)"><ellipse rx="6.7" ry="4.2" fill="url(#gb03)"/><path d="M-4.7 .6Q0 -1.7 4.7 .4" fill="none" stroke="#543016" stroke-width="1.3"/></g><g transform="translate(7.3 153)rotate(50)"><ellipse rx="6.7" ry="4.4" fill="url(#gb00)"/></g><g transform="translate(51.5 124.1)rotate(177)"><ellipse rx="7.1" ry="4.7" fill="url(#gb03)"/></g><g transform="translate(12.8 120.2)rotate(134)"><ellipse rx="7.2" ry="4.9" fill="url(#gb00)"/></g><g transform="translate(80 103.8)rotate(151)"><ellipse rx="7.9" ry="6" fill="url(#gb01)"/><path d="M-5.5 .6Q0 -2.4 5.5 .4" fill="none" stroke="#543016" stroke-width="1.3"/></g><g transform="translate(24.2 101.3)rotate(27)"><ellipse rx="8.7" ry="6" fill="url(#gb01)"/></g><g transform="translate(82.3 49.7)rotate(99)"><ellipse rx="9.4" ry="6.4" fill="url(#gb01)"/><path d="M-6.6 .6Q0 -2.5 6.6 .4" fill="none" stroke="#543016" stroke-width="1.3"/></g><g transform="translate(22.8 123.1)rotate(158)"><ellipse rx="7.6" ry="4.9" fill="url(#gb00)"/></g><g transform="translate(28.8 95)rotate(147)"><ellipse rx="7.8" ry="5.6" fill="url(#gb03)"/><path d="M-5.5 .6Q0 -2.3 5.5 .4" fill="none" stroke="#543016" stroke-width="1.3"/></g><g transform="translate(81.5 169.3)rotate(38)"><ellipse rx="8.8" ry="5.6" fill="url(#gb00)"/></g><g transform="translate(2.6 72.5)rotate(59)"><ellipse rx="8" ry="6" fill="url(#gb01)"/><path d="M-5.6 .6Q0 -2.4 5.6 .4" fill="none" stroke="#543016" stroke-width="1.3"/></g><g transform="translate(61 132.7)rotate(163)"><ellipse rx="8.4" ry="5.7" fill="url(#gb02)"/></g><g transform="translate(66.2 184.5)rotate(169)"><ellipse rx="8.2" ry="6.4" fill="url(#gb02)"/><path d="M-5.7 .6Q0 -2.6 5.7 .4" fill="none" stroke="#543016" stroke-width="1.3"/></g><g transform="translate(62.8 145.1)rotate(57)"><ellipse rx="8.8" ry="6" fill="url(#gb03)"/></g><g transform="translate(81.1 128.3)rotate(15)"><ellipse rx="8.6" ry="6.2" fill="url(#gb02)"/><path d="M-6.1 .6Q0 -2.5 6.1 .4" fill="none" stroke="#543016" stroke-width="1.3"/></g><g transform="translate(21.6 31.4)rotate(143)"><ellipse rx="8.5" ry="6.2" fill="url(#gb02)"/></g><g transform="translate(27 60.9)rotate(101)"><ellipse rx="8.1" ry="6.3" fill="url(#gb01)"/><path d="M-5.7 .6Q0 -2.5 5.7 .4" fill="none" stroke="#543016" stroke-width="1.3"/></g><g transform="translate(54.9 69.8)rotate(146)"><ellipse rx="7.9" ry="6.1" fill="url(#gb01)"/></g><g transform="translate(54.4 114.8)rotate(174)"><ellipse rx="8.1" ry="5.9" fill="url(#gb03)"/><path d="M-5.7 .6Q0 -2.3 5.7 .4" fill="none" stroke="#543016" stroke-width="1.3"/></g><g transform="translate(26.5 144.8)rotate(15)"><ellipse rx="8.1" ry="6.2" fill="url(#gb00)"/><path d="M-5.7 .6Q0 -2.5 5.7 .4" fill="none" stroke="#543016" stroke-width="1.3"/></g><g transform="translate(60.6 59.6)rotate(5)"><ellipse rx="6.9" ry="4.7" fill="url(#gb01)"/><path d="M-4.8 .6Q0 -1.9 4.8 .4" fill="none" stroke="#543016" stroke-width="1.3"/></g><g transform="translate(90.7 180.3)rotate(128)"><ellipse rx="8.9" ry="6.2" fill="url(#gb03)"/></g><g transform="translate(69.2 88.6)rotate(71)"><ellipse rx="8.1" ry="6.1" fill="url(#gb02)"/></g><g transform="translate(80 119.5)rotate(88)"><ellipse rx="7.5" ry="4.9" fill="url(#gb00)"/></g><g transform="translate(14.9 182.7)rotate(149)"><ellipse rx="9.2" ry="6.4" fill="url(#gb02)"/></g><g transform="translate(86.8 41.3)rotate(160)"><ellipse rx="8.9" ry="6.8" fill="url(#gb00)"/></g><g transform="translate(21 194)rotate(76)"><ellipse rx="8.6" ry="6.6" fill="url(#gb03)"/></g><g transform="translate(5.2 54)rotate(114)"><ellipse rx="7.3" ry="4.7" fill="url(#gb01)"/><path d="M-5.1 .6Q0 -1.9 5.1 .4" fill="none" stroke="#543016" stroke-width="1.3"/></g><g transform="translate(51 143.2)rotate(49)"><ellipse rx="7.7" ry="5.5" fill="url(#gb00)"/></g><g transform="translate(80.7 33.8)rotate(28)"><ellipse rx="8.6" ry="5.8" fill="url(#gb01)"/></g><g transform="translate(61.1 55.1)rotate(87)"><ellipse rx="8.7" ry="5.4" fill="url(#gb00)"/><path d="M-6.1 .6Q0 -2.2 6.1 .4" fill="none" stroke="#543016" stroke-width="1.3"/></g><g transform="translate(28.7 70.4)rotate(106)"><ellipse rx="7.2" ry="4.9" fill="url(#gb03)"/></g><g transform="translate(85.7 69.3)rotate(51)"><ellipse rx="7.2" ry="4.7" fill="url(#gb01)"/></g><g transform="translate(42.4 31.7)rotate(170)"><ellipse rx="9.2" ry="6.8" fill="url(#gb03)"/></g><g transform="translate(54.3 64)rotate(172)"><ellipse rx="8" ry="5.5" fill="url(#gb00)"/></g><g transform="translate(34.3 112.3)rotate(171)"><ellipse rx="7.2" ry="4.5" fill="url(#gb03)"/></g><g transform="translate(41.3 101.5)rotate(142)"><ellipse rx="8.8" ry="6.7" fill="url(#gb00)"/></g><g transform="translate(44.3 50)rotate(85)"><ellipse rx="7.3" ry="4.5" fill="url(#gb02)"/></g><g transform="translate(74.1 141.9)rotate(157)"><ellipse rx="7.3" ry="5.1" fill="url(#gb03)"/><path d="M-5.1 .6Q0 -2 5.1 .4" fill="none" stroke="#543016" stroke-width="1.3"/></g><g transform="translate(31.7 32.2)rotate(156)"><ellipse rx="7.5" ry="5" fill="url(#gb01)"/></g><g transform="translate(32.1 129)rotate(96)"><ellipse rx="9.4" ry="6.3" fill="url(#gb01)"/></g><g transform="translate(91.8 144.4)rotate(165)"><ellipse rx="7.1" ry="4.7" fill="url(#gb01)"/></g><g transform="translate(62.1 80)rotate(129)"><ellipse rx="6.8" ry="4.6" fill="url(#gb00)"/></g><g transform="translate(42.6 89.9)rotate(135)"><ellipse rx="8.5" ry="5.4" fill="url(#gb02)"/><path d="M-6 .6Q0 -2.2 6 .4" fill="none" stroke="#543016" stroke-width="1.3"/></g><g transform="translate(43.6 134.3)rotate(123)"><ellipse rx="7.1" ry="4.7" fill="url(#gb03)"/><path d="M-5 .6Q0 -1.9 5 .4" fill="none" stroke="#543016" stroke-width="1.3"/></g><g transform="translate(49 181.1)rotate(28)"><ellipse rx="8.1" ry="5.8" fill="url(#gb02)"/><path d="M-5.7 .6Q0 -2.3 5.7 .4" fill="none" stroke="#543016" stroke-width="1.3"/></g><g transform="translate(84.5 150.8)rotate(180)"><ellipse rx="7.7" ry="5.6" fill="url(#gb00)"/><path d="M-5.4 .6Q0 -2.2 5.4 .4" fill="none" stroke="#543016" stroke-width="1.3"/></g><g transform="translate(30.6 152.9)rotate(71)"><ellipse rx="8.5" ry="5.4" fill="url(#gb03)"/></g><g transform="translate(67.8 30.2)rotate(80)"><ellipse rx="8.8" ry="5.6" fill="url(#gb03)"/></g><g transform="translate(8.7 144.5)rotate(20)"><ellipse rx="7.9" ry="5.3" fill="url(#gb00)"/></g><g transform="translate(12.5 81.2)rotate(162)"><ellipse rx="9" ry="6.7" fill="url(#gb01)"/><path d="M-6.3 .6Q0 -2.7 6.3 .4" fill="none" stroke="#543016" stroke-width="1.3"/></g><g transform="translate(58.5 33.7)rotate(54)"><ellipse rx="7.7" ry="5.5" fill="url(#gb02)"/></g><g transform="translate(24.7 184.3)rotate(34)"><ellipse rx="8.2" ry="5.2" fill="url(#gb03)"/></g><g transform="translate(39.2 42.4)rotate(101)"><ellipse rx="7.5" ry="5.9" fill="url(#gb02)"/><path d="M-5.3 .6Q0 -2.4 5.3 .4" fill="none" stroke="#543016" stroke-width="1.3"/></g><g transform="translate(88.7 84.3)rotate(112)"><ellipse rx="7.7" ry="4.9" fill="url(#gb01)"/></g><g transform="translate(16.5 114.8)rotate(72)"><ellipse rx="8.6" ry="5.6" fill="url(#gb03)"/></g><g transform="translate(34.7 142.6)rotate(28)"><ellipse rx="6.9" ry="4.5" fill="url(#gb00)"/><path d="M-4.8 .6Q0 -1.8 4.8 .4" fill="none" stroke="#543016" stroke-width="1.3"/></g><g transform="translate(57.3 190)rotate(148)"><ellipse rx="8.8" ry="6" fill="url(#gb01)"/></g><g transform="translate(36.9 182.8)rotate(69)"><ellipse rx="8.7" ry="6.7" fill="url(#gb02)"/></g><g transform="translate(12.7 162.4)rotate(110)"><ellipse rx="8.3" ry="6.3" fill="url(#gb02)"/></g><g transform="translate(80.4 83.7)rotate(110)"><ellipse rx="8.8" ry="6.5" fill="url(#gb00)"/><path d="M-6.2 .6Q0 -2.6 6.2 .4" fill="none" stroke="#543016" stroke-width="1.3"/></g></g></g><g clip-path="url(#cb1)"><g filter="url(#blb)"><rect x="90.6" y="27.6" width="89.3" height="161.8" fill="#1e100a"/><g transform="translate(100.2 101)rotate(11)"><ellipse rx="7.7" ry="5.7" fill="url(#gb12)"/></g><g transform="translate(124.7 102.4)rotate(166)"><ellipse rx="9.2" ry="7.1" fill="url(#gb11)"/></g><g transform="translate(162.1 113.2)rotate(69)"><ellipse rx="7.7" ry="5.9" fill="url(#gb10)"/><path d="M-5.4 .6Q0 -2.4 5.4 .4" fill="none" stroke="#20110a" stroke-width="1.3"/></g><g transform="translate(177.8 60.9)rotate(99)"><ellipse rx="7.6" ry="4.9" fill="url(#gb11)"/></g><g transform="translate(107.1 90.9)rotate(137)"><ellipse rx="7.7" ry="5.6" fill="url(#gb13)"/><path d="M-5.4 .6Q0 -2.2 5.4 .4" fill="none" stroke="#20110a" stroke-width="1.3"/></g><g transform="translate(148.8 42.7)rotate(155)"><ellipse rx="9.4" ry="7" fill="url(#gb11)"/></g><g transform="translate(91.8 154.7)rotate(50)"><ellipse rx="7.8" ry="4.9" fill="url(#gb12)"/></g><g transform="translate(132.9 112.7)rotate(92)"><ellipse rx="8.1" ry="6.1" fill="url(#gb11)"/><path d="M-5.6 .6Q0 -2.4 5.6 .4" fill="none" stroke="#20110a" stroke-width="1.3"/></g><g transform="translate(136.1 121.7)rotate(169)"><ellipse rx="7.6" ry="4.9" fill="url(#gb12)"/><path d="M-5.3 .6Q0 -2 5.3 .4" fill="none" stroke="#20110a" stroke-width="1.3"/></g><g transform="translate(145 154.3)rotate(21)"><ellipse rx="7.3" ry="5.6" fill="url(#gb12)"/></g><g transform="translate(116.8 114.5)rotate(69)"><ellipse rx="7.9" ry="6.1" fill="url(#gb12)"/></g><g transform="translate(165.6 121.3)rotate(71)"><ellipse rx="8.1" ry="5.1" fill="url(#gb11)"/></g><g transform="translate(132.3 94.4)rotate(23)"><ellipse rx="7.1" ry="5.1" fill="url(#gb11)"/><path d="M-5 .6Q0 -2 5 .4" fill="none" stroke="#20110a" stroke-width="1.3"/></g><g transform="translate(132.5 188.3)rotate(24)"><ellipse rx="7.8" ry="5.6" fill="url(#gb12)"/><path d="M-5.5 .6Q0 -2.2 5.5 .4" fill="none" stroke="#20110a" stroke-width="1.3"/></g><g transform="translate(106.2 131.3)rotate(158)"><ellipse rx="7.9" ry="5.4" fill="url(#gb12)"/></g><g transform="translate(112 79)rotate(93)"><ellipse rx="7.9" ry="5.1" fill="url(#gb12)"/><path d="M-5.5 .6Q0 -2 5.5 .4" fill="none" stroke="#20110a" stroke-width="1.3"/></g><g transform="translate(119.8 129.1)rotate(39)"><ellipse rx="7.4" ry="5.1" fill="url(#gb10)"/></g><g transform="translate(135.8 183.6)rotate(2)"><ellipse rx="8.7" ry="6.1" fill="url(#gb12)"/></g><g transform="translate(106.2 32)rotate(100)"><ellipse rx="6.8" ry="5.3" fill="url(#gb12)"/></g><g transform="translate(171.9 171.1)rotate(42)"><ellipse rx="9.3" ry="7.2" fill="url(#gb12)"/><path d="M-6.5 .6Q0 -2.9 6.5 .4" fill="none" stroke="#20110a" stroke-width="1.3"/></g><g transform="translate(168.3 71.8)rotate(11)"><ellipse rx="7.8" ry="5.4" fill="url(#gb13)"/></g><g transform="translate(135.8 150)rotate(40)"><ellipse rx="7.4" ry="5.5" fill="url(#gb13)"/><path d="M-5.2 .6Q0 -2.2 5.2 .4" fill="none" stroke="#20110a" stroke-width="1.3"/></g><g transform="translate(97.4 80.9)rotate(128)"><ellipse rx="8.8" ry="6" fill="url(#gb10)"/></g><g transform="translate(134.2 49.8)rotate(86)"><ellipse rx="9.1" ry="7" fill="url(#gb12)"/></g><g transform="translate(167 39.1)rotate(4)"><ellipse rx="8.1" ry="6.1" fill="url(#gb13)"/><path d="M-5.7 .6Q0 -2.4 5.7 .4" fill="none" stroke="#20110a" stroke-width="1.3"/></g><g transform="translate(154.9 138.2)rotate(49)"><ellipse rx="9.1" ry="7.2" fill="url(#gb13)"/></g><g transform="translate(142.6 174.5)rotate(59)"><ellipse rx="8.2" ry="5.8" fill="url(#gb12)"/><path d="M-5.8 .6Q0 -2.3 5.8 .4" fill="none" stroke="#20110a" stroke-width="1.3"/></g><g transform="translate(150.9 103.6)rotate(67)"><ellipse rx="6.7" ry="4.5" fill="url(#gb12)"/><path d="M-4.7 .6Q0 -1.8 4.7 .4" fill="none" stroke="#20110a" stroke-width="1.3"/></g><g transform="translate(178.2 164.9)rotate(84)"><ellipse rx="8.5" ry="5.5" fill="url(#gb12)"/></g><g transform="translate(111 144.1)rotate(170)"><ellipse rx="7.6" ry="5.5" fill="url(#gb10)"/></g><g transform="translate(100.2 42.1)rotate(75)"><ellipse rx="8.3" ry="5.8" fill="url(#gb12)"/><path d="M-5.8 .6Q0 -2.3 5.8 .4" fill="none" stroke="#20110a" stroke-width="1.3"/></g><g transform="translate(91.4 30.2)rotate(174)"><ellipse rx="7.9" ry="5.5" fill="url(#gb13)"/><path d="M-5.5 .6Q0 -2.2 5.5 .4" fill="none" stroke="#20110a" stroke-width="1.3"/></g><g transform="translate(149.5 124.3)rotate(56)"><ellipse rx="7" ry="5" fill="url(#gb12)"/></g><g transform="translate(137.8 144.1)rotate(49)"><ellipse rx="6.7" ry="4.9" fill="url(#gb12)"/></g><g transform="translate(159.5 195)rotate(98)"><ellipse rx="7.3" ry="4.5" fill="url(#gb13)"/><path d="M-5.1 .6Q0 -1.8 5.1 .4" fill="none" stroke="#20110a" stroke-width="1.3"/></g><g transform="translate(165.3 158.9)rotate(138)"><ellipse rx="8.1" ry="6.3" fill="url(#gb10)"/></g><g transform="translate(155.9 88.9)rotate(174)"><ellipse rx="8.2" ry="6.3" fill="url(#gb12)"/><path d="M-5.7 .6Q0 -2.5 5.7 .4" fill="none" stroke="#20110a" stroke-width="1.3"/></g><g transform="translate(109.8 104.5)rotate(145)"><ellipse rx="6.9" ry="4.3" fill="url(#gb11)"/></g><g transform="translate(111 44.6)rotate(148)"><ellipse rx="8.5" ry="6.8" fill="url(#gb11)"/><path d="M-6 .6Q0 -2.7 6 .4" fill="none" stroke="#20110a" stroke-width="1.3"/></g><g transform="translate(166 143)rotate(53)"><ellipse rx="8.5" ry="6.5" fill="url(#gb13)"/><path d="M-6 .6Q0 -2.6 6 .4" fill="none" stroke="#20110a" stroke-width="1.3"/></g><g transform="translate(177.9 41)rotate(43)"><ellipse rx="8.7" ry="6.2" fill="url(#gb11)"/><path d="M-6.1 .6Q0 -2.5 6.1 .4" fill="none" stroke="#20110a" stroke-width="1.3"/></g><g transform="translate(118.2 153.8)rotate(133)"><ellipse rx="8.6" ry="6.7" fill="url(#gb10)"/></g><g transform="translate(146.9 93.9)rotate(56)"><ellipse rx="8.9" ry="6.9" fill="url(#gb13)"/></g><g transform="translate(165.8 63.8)rotate(112)"><ellipse rx="8.5" ry="5.3" fill="url(#gb13)"/></g><g transform="translate(169.3 53.3)rotate(91)"><ellipse rx="6.7" ry="4.5" fill="url(#gb13)"/><path d="M-4.7 .6Q0 -1.8 4.7 .4" fill="none" stroke="#20110a" stroke-width="1.3"/></g><g transform="translate(157.3 130.4)rotate(123)"><ellipse rx="8.4" ry="5.7" fill="url(#gb11)"/><path d="M-5.9 .6Q0 -2.3 5.9 .4" fill="none" stroke="#20110a" stroke-width="1.3"/></g><g transform="translate(110.1 69.1)rotate(149)"><ellipse rx="8.7" ry="6.7" fill="url(#gb13)"/></g><g transform="translate(136 83.6)rotate(48)"><ellipse rx="7" ry="5.2" fill="url(#gb11)"/><path d="M-4.9 .6Q0 -2.1 4.9 .4" fill="none" stroke="#20110a" stroke-width="1.3"/></g><g transform="translate(96.4 94.5)rotate(42)"><ellipse rx="7.7" ry="5.7" fill="url(#gb11)"/></g><g transform="translate(118.1 94.3)rotate(142)"><ellipse rx="7.9" ry="5.9" fill="url(#gb11)"/><path d="M-5.5 .6Q0 -2.4 5.5 .4" fill="none" stroke="#20110a" stroke-width="1.3"/></g><g transform="translate(148.7 114.3)rotate(120)"><ellipse rx="7.4" ry="4.9" fill="url(#gb13)"/></g><g transform="translate(127.4 138.5)rotate(128)"><ellipse rx="9.4" ry="5.9" fill="url(#gb10)"/></g><g transform="translate(109.2 50)rotate(97)"><ellipse rx="7.1" ry="4.9" fill="url(#gb10)"/><path d="M-5 .6Q0 -2 5 .4" fill="none" stroke="#20110a" stroke-width="1.3"/></g><g transform="translate(122.3 51.3)rotate(154)"><ellipse rx="9.1" ry="7" fill="url(#gb11)"/><path d="M-6.4 .6Q0 -2.8 6.4 .4" fill="none" stroke="#20110a" stroke-width="1.3"/></g><g transform="translate(138.1 63.4)rotate(151)"><ellipse rx="7.5" ry="5.7" fill="url(#gb12)"/><path d="M-5.2 .6Q0 -2.3 5.2 .4" fill="none" stroke="#20110a" stroke-width="1.3"/></g><g transform="translate(142.2 42.1)rotate(26)"><ellipse rx="8.6" ry="6" fill="url(#gb13)"/></g><g transform="translate(116.5 179.4)rotate(156)"><ellipse rx="7.2" ry="4.8" fill="url(#gb13)"/><path d="M-5 .6Q0 -1.9 5 .4" fill="none" stroke="#20110a" stroke-width="1.3"/></g><g transform="translate(138.6 100.7)rotate(45)"><ellipse rx="6.9" ry="5.4" fill="url(#gb13)"/><path d="M-4.8 .6Q0 -2.2 4.8 .4" fill="none" stroke="#20110a" stroke-width="1.3"/></g><g transform="translate(166 184.5)rotate(49)"><ellipse rx="7" ry="5.5" fill="url(#gb11)"/><path d="M-4.9 .6Q0 -2.2 4.9 .4" fill="none" stroke="#20110a" stroke-width="1.3"/></g><g transform="translate(125.6 119)rotate(15)"><ellipse rx="7.7" ry="5.2" fill="url(#gb11)"/><path d="M-5.4 .6Q0 -2.1 5.4 .4" fill="none" stroke="#20110a" stroke-width="1.3"/></g><g transform="translate(135.4 72.4)rotate(12)"><ellipse rx="7.3" ry="4.6" fill="url(#gb12)"/></g><g transform="translate(124.3 84.6)rotate(25)"><ellipse rx="6.6" ry="4.5" fill="url(#gb11)"/></g><g transform="translate(174.7 90.4)rotate(63)"><ellipse rx="7.7" ry="4.8" fill="url(#gb13)"/></g><g transform="translate(173.6 151)rotate(149)"><ellipse rx="7.2" ry="5.3" fill="url(#gb12)"/><path d="M-5 .6Q0 -2.1 5 .4" fill="none" stroke="#20110a" stroke-width="1.3"/></g><g transform="translate(164.4 81.6)rotate(179)"><ellipse rx="9.2" ry="7.2" fill="url(#gb13)"/></g><g transform="translate(158.9 30.2)rotate(154)"><ellipse rx="9.2" ry="5.8" fill="url(#gb11)"/></g><g transform="translate(167.8 104.2)rotate(4)"><ellipse rx="8.5" ry="5.7" fill="url(#gb12)"/><path d="M-5.9 .6Q0 -2.3 5.9 .4" fill="none" stroke="#20110a" stroke-width="1.3"/></g><g transform="translate(153.7 83.6)rotate(11)"><ellipse rx="7.9" ry="6.2" fill="url(#gb12)"/><path d="M-5.5 .6Q0 -2.5 5.5 .4" fill="none" stroke="#20110a" stroke-width="1.3"/></g><g transform="translate(157.4 154.8)rotate(143)"><ellipse rx="8.1" ry="6.2" fill="url(#gb13)"/><path d="M-5.7 .6Q0 -2.5 5.7 .4" fill="none" stroke="#20110a" stroke-width="1.3"/></g><g transform="translate(146.1 51.9)rotate(138)"><ellipse rx="8.8" ry="6.8" fill="url(#gb10)"/></g><g transform="translate(155.1 172.2)rotate(74)"><ellipse rx="7.9" ry="6.1" fill="url(#gb10)"/><path d="M-5.6 .6Q0 -2.5 5.6 .4" fill="none" stroke="#20110a" stroke-width="1.3"/></g><g transform="translate(123.9 183.2)rotate(130)"><ellipse rx="7" ry="4.7" fill="url(#gb12)"/></g><g transform="translate(110.6 64.6)rotate(64)"><ellipse rx="7.6" ry="5.6" fill="url(#gb12)"/><path d="M-5.3 .6Q0 -2.2 5.3 .4" fill="none" stroke="#20110a" stroke-width="1.3"/></g><g transform="translate(122.5 190.3)rotate(48)"><ellipse rx="8.4" ry="6.1" fill="url(#gb11)"/></g><g transform="translate(129.6 43)rotate(98)"><ellipse rx="7.2" ry="5.4" fill="url(#gb11)"/><path d="M-5 .6Q0 -2.2 5 .4" fill="none" stroke="#20110a" stroke-width="1.3"/></g><g transform="translate(131.2 28.8)rotate(63)"><ellipse rx="6.9" ry="4.5" fill="url(#gb13)"/><path d="M-4.8 .6Q0 -1.8 4.8 .4" fill="none" stroke="#20110a" stroke-width="1.3"/></g><g transform="translate(124.5 163.1)rotate(17)"><ellipse rx="7.7" ry="4.9" fill="url(#gb11)"/><path d="M-5.4 .6Q0 -1.9 5.4 .4" fill="none" stroke="#20110a" stroke-width="1.3"/></g><g transform="translate(149.7 184.4)rotate(106)"><ellipse rx="7.1" ry="4.5" fill="url(#gb12)"/><path d="M-5 .6Q0 -1.8 5 .4" fill="none" stroke="#20110a" stroke-width="1.3"/></g><g transform="translate(110.7 122.6)rotate(73)"><ellipse rx="9.3" ry="6.1" fill="url(#gb11)"/></g><g transform="translate(96.3 188.5)rotate(166)"><ellipse rx="6.8" ry="4.7" fill="url(#gb11)"/></g><g transform="translate(139.1 160.2)rotate(131)"><ellipse rx="8.1" ry="5" fill="url(#gb13)"/></g><g transform="translate(178.5 141.8)rotate(62)"><ellipse rx="6.8" ry="4.9" fill="url(#gb13)"/></g><g transform="translate(117.5 30.4)rotate(102)"><ellipse rx="8.4" ry="5.9" fill="url(#gb10)"/><path d="M-5.9 .6Q0 -2.4 5.9 .4" fill="none" stroke="#20110a" stroke-width="1.3"/></g><g transform="translate(150.5 163.7)rotate(79)"><ellipse rx="8.7" ry="6.5" fill="url(#gb13)"/><path d="M-6.1 .6Q0 -2.6 6.1 .4" fill="none" stroke="#20110a" stroke-width="1.3"/></g><g transform="translate(155.5 54.5)rotate(108)"><ellipse rx="7.7" ry="5.1" fill="url(#gb10)"/></g><g transform="translate(175.3 80.5)rotate(80)"><ellipse rx="6.7" ry="4.9" fill="url(#gb10)"/></g><g transform="translate(122.6 62.9)rotate(84)"><ellipse rx="9.2" ry="6" fill="url(#gb12)"/></g><g transform="translate(109.9 111.4)rotate(178)"><ellipse rx="7.5" ry="5.6" fill="url(#gb13)"/><path d="M-5.2 .6Q0 -2.3 5.2 .4" fill="none" stroke="#20110a" stroke-width="1.3"/></g><g transform="translate(133.9 129.7)rotate(162)"><ellipse rx="9.3" ry="7" fill="url(#gb10)"/><path d="M-6.5 .6Q0 -2.8 6.5 .4" fill="none" stroke="#20110a" stroke-width="1.3"/></g><g transform="translate(169.7 32.4)rotate(169)"><ellipse rx="9" ry="6.6" fill="url(#gb10)"/></g><g transform="translate(173.3 191.8)rotate(12)"><ellipse rx="8" ry="6.4" fill="url(#gb10)"/></g><g transform="translate(151.1 59.3)rotate(82)"><ellipse rx="7.3" ry="5.6" fill="url(#gb10)"/></g><g transform="translate(147.1 29.9)rotate(116)"><ellipse rx="7.1" ry="4.8" fill="url(#gb10)"/><path d="M-5 .6Q0 -1.9 5 .4" fill="none" stroke="#20110a" stroke-width="1.3"/></g><g transform="translate(100.6 179.3)rotate(158)"><ellipse rx="7.8" ry="5.9" fill="url(#gb10)"/></g><g transform="translate(100.4 122)rotate(99)"><ellipse rx="9" ry="6.8" fill="url(#gb10)"/></g><g transform="translate(103.5 193.5)rotate(18)"><ellipse rx="7" ry="4.8" fill="url(#gb10)"/></g><g transform="translate(144.2 131.3)rotate(52)"><ellipse rx="9.3" ry="6.1" fill="url(#gb13)"/><path d="M-6.5 .6Q0 -2.4 6.5 .4" fill="none" stroke="#20110a" stroke-width="1.3"/></g><g transform="translate(95.6 74.6)rotate(111)"><ellipse rx="7.7" ry="5.9" fill="url(#gb13)"/><path d="M-5.4 .6Q0 -2.4 5.4 .4" fill="none" stroke="#20110a" stroke-width="1.3"/></g><g transform="translate(176.7 123.2)rotate(113)"><ellipse rx="9.4" ry="6.2" fill="url(#gb11)"/></g><g transform="translate(174.2 110.7)rotate(147)"><ellipse rx="9.4" ry="6.5" fill="url(#gb12)"/></g><g transform="translate(156.2 71)rotate(38)"><ellipse rx="9.2" ry="6.8" fill="url(#gb11)"/><path d="M-6.5 .6Q0 -2.7 6.5 .4" fill="none" stroke="#20110a" stroke-width="1.3"/></g><g transform="translate(178.7 178.1)rotate(84)"><ellipse rx="7" ry="5.2" fill="url(#gb11)"/><path d="M-4.9 .6Q0 -2.1 4.9 .4" fill="none" stroke="#20110a" stroke-width="1.3"/></g><g transform="translate(110.4 162.9)rotate(112)"><ellipse rx="7.3" ry="5" fill="url(#gb12)"/><path d="M-5.1 .6Q0 -2 5.1 .4" fill="none" stroke="#20110a" stroke-width="1.3"/></g><g transform="translate(129.6 174.5)rotate(133)"><ellipse rx="9.4" ry="7" fill="url(#gb12)"/></g><g transform="translate(97.8 164.1)rotate(13)"><ellipse rx="8.8" ry="5.7" fill="url(#gb12)"/><path d="M-6.1 .6Q0 -2.3 6.1 .4" fill="none" stroke="#20110a" stroke-width="1.3"/></g><g transform="translate(120.8 171.3)rotate(82)"><ellipse rx="8.9" ry="6.2" fill="url(#gb10)"/></g><g transform="translate(146.6 73.4)rotate(42)"><ellipse rx="7.6" ry="5.7" fill="url(#gb10)"/><path d="M-5.3 .6Q0 -2.3 5.3 .4" fill="none" stroke="#20110a" stroke-width="1.3"/></g><g transform="translate(144.1 193.9)rotate(154)"><ellipse rx="9" ry="6.1" fill="url(#gb13)"/><path d="M-6.3 .6Q0 -2.4 6.3 .4" fill="none" stroke="#20110a" stroke-width="1.3"/></g><g transform="translate(90.3 129.3)rotate(75)"><ellipse rx="7.9" ry="5.2" fill="url(#gb11)"/><path d="M-5.6 .6Q0 -2.1 5.6 .4" fill="none" stroke="#20110a" stroke-width="1.3"/></g><g transform="translate(91.8 114.2)rotate(51)"><ellipse rx="6.8" ry="4.7" fill="url(#gb13)"/></g><g transform="translate(109.9 152.7)rotate(2)"><ellipse rx="7.3" ry="5.4" fill="url(#gb11)"/><path d="M-5.1 .6Q0 -2.2 5.1 .4" fill="none" stroke="#20110a" stroke-width="1.3"/></g><g transform="translate(121.4 74)rotate(156)"><ellipse rx="7.6" ry="5.6" fill="url(#gb13)"/><path d="M-5.4 .6Q0 -2.2 5.4 .4" fill="none" stroke="#20110a" stroke-width="1.3"/></g><g transform="translate(176.3 104)rotate(153)"><ellipse rx="7.6" ry="5.8" fill="url(#gb10)"/></g><g transform="translate(102 144.3)rotate(16)"><ellipse rx="6.9" ry="5.4" fill="url(#gb12)"/><path d="M-4.8 .6Q0 -2.1 4.8 .4" fill="none" stroke="#20110a" stroke-width="1.3"/></g><g transform="translate(92.4 48.7)rotate(126)"><ellipse rx="6.7" ry="4.9" fill="url(#gb10)"/></g><g transform="translate(102.9 60.4)rotate(31)"><ellipse rx="7" ry="4.5" fill="url(#gb12)"/></g><g transform="translate(96.4 169.4)rotate(40)"><ellipse rx="8.4" ry="5.3" fill="url(#gb10)"/></g><g transform="translate(104.7 169)rotate(117)"><ellipse rx="7.7" ry="5.9" fill="url(#gb10)"/></g><g transform="translate(169.1 133.5)rotate(72)"><ellipse rx="6.8" ry="4.8" fill="url(#gb11)"/></g></g></g><g clip-path="url(#cb2)"><g filter="url(#blb)"><rect x="178.6" y="27.6" width="90.3" height="161.8" fill="#160d09"/><g transform="translate(232.5 114.1)rotate(14)"><ellipse rx="7.8" ry="5.5" fill="url(#gb23)"/><path d="M-5.4 .6Q0 -2.2 5.4 .4" fill="none" stroke="#140b08" stroke-width="1.3"/></g><g transform="translate(249.4 32.7)rotate(16)"><ellipse rx="9.2" ry="7.2" fill="url(#gb22)"/><path d="M-6.5 .6Q0 -2.9 6.5 .4" fill="none" stroke="#140b08" stroke-width="1.3"/></g><g transform="translate(254.4 100.6)rotate(27)"><ellipse rx="7.2" ry="4.8" fill="url(#gb21)"/></g><g transform="translate(250.4 63.9)rotate(88)"><ellipse rx="9.2" ry="5.7" fill="url(#gb22)"/></g><g transform="translate(258.4 132.5)rotate(173)"><ellipse rx="6.8" ry="4.9" fill="url(#gb20)"/><path d="M-4.8 .6Q0 -2 4.8 .4" fill="none" stroke="#140b08" stroke-width="1.3"/></g><g transform="translate(221.9 191.6)rotate(178)"><ellipse rx="7.4" ry="5" fill="url(#gb23)"/><path d="M-5.2 .6Q0 -2 5.2 .4" fill="none" stroke="#140b08" stroke-width="1.3"/></g><g transform="translate(205.4 192.4)rotate(94)"><ellipse rx="8.9" ry="6.6" fill="url(#gb20)"/><path d="M-6.2 .6Q0 -2.7 6.2 .4" fill="none" stroke="#140b08" stroke-width="1.3"/></g><g transform="translate(221.7 148.9)rotate(176)"><ellipse rx="6.8" ry="5.2" fill="url(#gb21)"/><path d="M-4.8 .6Q0 -2.1 4.8 .4" fill="none" stroke="#140b08" stroke-width="1.3"/></g><g transform="translate(230.1 183.7)rotate(3)"><ellipse rx="7.5" ry="5.1" fill="url(#gb21)"/><path d="M-5.3 .6Q0 -2.1 5.3 .4" fill="none" stroke="#140b08" stroke-width="1.3"/></g><g transform="translate(189.1 120.7)rotate(60)"><ellipse rx="8.2" ry="5.9" fill="url(#gb22)"/></g><g transform="translate(259.5 191.5)rotate(32)"><ellipse rx="7.3" ry="5.7" fill="url(#gb21)"/><path d="M-5.1 .6Q0 -2.3 5.1 .4" fill="none" stroke="#140b08" stroke-width="1.3"/></g><g transform="translate(198.7 40.7)rotate(165)"><ellipse rx="7.9" ry="5.2" fill="url(#gb21)"/><path d="M-5.5 .6Q0 -2.1 5.5 .4" fill="none" stroke="#140b08" stroke-width="1.3"/></g><g transform="translate(193.8 188.9)rotate(94)"><ellipse rx="8.4" ry="5.6" fill="url(#gb22)"/></g><g transform="translate(229.8 38.9)rotate(12)"><ellipse rx="6.7" ry="4.5" fill="url(#gb22)"/></g><g transform="translate(181.5 130.9)rotate(45)"><ellipse rx="7.2" ry="4.5" fill="url(#gb20)"/><path d="M-5 .6Q0 -1.8 5 .4" fill="none" stroke="#140b08" stroke-width="1.3"/></g><g transform="translate(214.2 101.8)rotate(39)"><ellipse rx="8.7" ry="5.8" fill="url(#gb23)"/></g><g transform="translate(264.3 104.8)rotate(13)"><ellipse rx="7" ry="5.2" fill="url(#gb20)"/></g><g transform="translate(193.7 70.2)rotate(142)"><ellipse rx="7.7" ry="5" fill="url(#gb21)"/><path d="M-5.4 .6Q0 -2 5.4 .4" fill="none" stroke="#140b08" stroke-width="1.3"/></g><g transform="translate(180.4 168.2)rotate(52)"><ellipse rx="8.8" ry="6.1" fill="url(#gb20)"/></g><g transform="translate(196.1 153)rotate(90)"><ellipse rx="8.9" ry="5.5" fill="url(#gb23)"/></g><g transform="translate(196.9 31.7)rotate(12)"><ellipse rx="7.8" ry="5.1" fill="url(#gb21)"/></g><g transform="translate(243.5 84.6)rotate(62)"><ellipse rx="9.3" ry="7.3" fill="url(#gb21)"/><path d="M-6.5 .6Q0 -2.9 6.5 .4" fill="none" stroke="#140b08" stroke-width="1.3"/></g><g transform="translate(263.1 179.4)rotate(35)"><ellipse rx="8.6" ry="6.8" fill="url(#gb21)"/></g><g transform="translate(196.9 172.7)rotate(159)"><ellipse rx="7.3" ry="5.6" fill="url(#gb23)"/><path d="M-5.1 .6Q0 -2.2 5.1 .4" fill="none" stroke="#140b08" stroke-width="1.3"/></g><g transform="translate(198.2 122.1)rotate(26)"><ellipse rx="8.6" ry="6.8" fill="url(#gb20)"/></g><g transform="translate(262.9 31.4)rotate(22)"><ellipse rx="8.6" ry="6.4" fill="url(#gb22)"/><path d="M-6 .6Q0 -2.6 6 .4" fill="none" stroke="#140b08" stroke-width="1.3"/></g><g transform="translate(206.9 152.9)rotate(97)"><ellipse rx="6.9" ry="5" fill="url(#gb23)"/></g><g transform="translate(234.2 51.4)rotate(15)"><ellipse rx="8.1" ry="6.4" fill="url(#gb21)"/><path d="M-5.7 .6Q0 -2.6 5.7 .4" fill="none" stroke="#140b08" stroke-width="1.3"/></g><g transform="translate(228.7 100.7)rotate(168)"><ellipse rx="9.2" ry="7.3" fill="url(#gb21)"/><path d="M-6.4 .6Q0 -2.9 6.4 .4" fill="none" stroke="#140b08" stroke-width="1.3"/></g><g transform="translate(182.2 31.6)rotate(53)"><ellipse rx="7.5" ry="5.4" fill="url(#gb23)"/><path d="M-5.3 .6Q0 -2.2 5.3 .4" fill="none" stroke="#140b08" stroke-width="1.3"/></g><g transform="translate(217.9 113.4)rotate(7)"><ellipse rx="9.4" ry="6.6" fill="url(#gb21)"/></g><g transform="translate(240.8 98.8)rotate(137)"><ellipse rx="9.3" ry="5.8" fill="url(#gb23)"/></g><g transform="translate(221.9 171.3)rotate(72)"><ellipse rx="7.4" ry="4.6" fill="url(#gb21)"/></g><g transform="translate(190.8 41.1)rotate(173)"><ellipse rx="6.7" ry="4.6" fill="url(#gb20)"/></g><g transform="translate(235 33.6)rotate(55)"><ellipse rx="7.1" ry="4.4" fill="url(#gb20)"/><path d="M-5 .6Q0 -1.8 5 .4" fill="none" stroke="#140b08" stroke-width="1.3"/></g><g transform="translate(202 180.6)rotate(124)"><ellipse rx="9" ry="6.5" fill="url(#gb22)"/></g><g transform="translate(244.6 112.2)rotate(159)"><ellipse rx="7.5" ry="5.1" fill="url(#gb23)"/><path d="M-5.2 .6Q0 -2 5.2 .4" fill="none" stroke="#140b08" stroke-width="1.3"/></g><g transform="translate(185.2 181.5)rotate(171)"><ellipse rx="8.2" ry="5.5" fill="url(#gb23)"/><path d="M-5.8 .6Q0 -2.2 5.8 .4" fill="none" stroke="#140b08" stroke-width="1.3"/></g><g transform="translate(219.6 49.8)rotate(159)"><ellipse rx="9.2" ry="7.1" fill="url(#gb21)"/></g><g transform="translate(215.4 139.1)rotate(138)"><ellipse rx="8.2" ry="6.4" fill="url(#gb22)"/><path d="M-5.7 .6Q0 -2.6 5.7 .4" fill="none" stroke="#140b08" stroke-width="1.3"/></g><g transform="translate(212 163)rotate(171)"><ellipse rx="8.2" ry="5.3" fill="url(#gb22)"/></g><g transform="translate(180.6 153.9)rotate(86)"><ellipse rx="8.4" ry="5.2" fill="url(#gb20)"/></g><g transform="translate(200.1 104.8)rotate(68)"><ellipse rx="9.2" ry="6.5" fill="url(#gb20)"/></g><g transform="translate(196.6 90.8)rotate(152)"><ellipse rx="7.7" ry="5.5" fill="url(#gb23)"/><path d="M-5.4 .6Q0 -2.2 5.4 .4" fill="none" stroke="#140b08" stroke-width="1.3"/></g><g transform="translate(178.9 73.3)rotate(11)"><ellipse rx="7.5" ry="5.5" fill="url(#gb21)"/></g><g transform="translate(208.4 70.9)rotate(15)"><ellipse rx="7.4" ry="5.2" fill="url(#gb20)"/><path d="M-5.2 .6Q0 -2.1 5.2 .4" fill="none" stroke="#140b08" stroke-width="1.3"/></g><g transform="translate(253 161.9)rotate(46)"><ellipse rx="8.9" ry="6.8" fill="url(#gb20)"/><path d="M-6.2 .6Q0 -2.7 6.2 .4" fill="none" stroke="#140b08" stroke-width="1.3"/></g><g transform="translate(248.9 131.5)rotate(88)"><ellipse rx="8.2" ry="6.4" fill="url(#gb23)"/><path d="M-5.7 .6Q0 -2.6 5.7 .4" fill="none" stroke="#140b08" stroke-width="1.3"/></g><g transform="translate(242.2 161.7)rotate(91)"><ellipse rx="7.5" ry="5.5" fill="url(#gb21)"/></g><g transform="translate(211.6 62.1)rotate(54)"><ellipse rx="8.5" ry="6" fill="url(#gb21)"/></g><g transform="translate(183 114)rotate(146)"><ellipse rx="8.8" ry="6.6" fill="url(#gb21)"/><path d="M-6.2 .6Q0 -2.6 6.2 .4" fill="none" stroke="#140b08" stroke-width="1.3"/></g><g transform="translate(238.4 179.8)rotate(8)"><ellipse rx="7.9" ry="5.9" fill="url(#gb20)"/></g><g transform="translate(206.5 133.1)rotate(116)"><ellipse rx="8.4" ry="5.9" fill="url(#gb23)"/></g><g transform="translate(268.4 144.8)rotate(120)"><ellipse rx="8.4" ry="5.3" fill="url(#gb20)"/><path d="M-5.9 .6Q0 -2.1 5.9 .4" fill="none" stroke="#140b08" stroke-width="1.3"/></g><g transform="translate(264.6 125.1)rotate(46)"><ellipse rx="7.4" ry="5.1" fill="url(#gb22)"/></g><g transform="translate(250.3 82.5)rotate(131)"><ellipse rx="8.3" ry="5.4" fill="url(#gb20)"/><path d="M-5.8 .6Q0 -2.1 5.8 .4" fill="none" stroke="#140b08" stroke-width="1.3"/></g><g transform="translate(236.8 119.1)rotate(135)"><ellipse rx="7.7" ry="5.3" fill="url(#gb20)"/></g><g transform="translate(242.2 141.2)rotate(89)"><ellipse rx="9.2" ry="6.8" fill="url(#gb23)"/></g><g transform="translate(204.5 109.4)rotate(90)"><ellipse rx="6.7" ry="5.2" fill="url(#gb21)"/><path d="M-4.7 .6Q0 -2.1 4.7 .4" fill="none" stroke="#140b08" stroke-width="1.3"/></g><g transform="translate(261 170.9)rotate(28)"><ellipse rx="8.3" ry="5.3" fill="url(#gb23)"/><path d="M-5.8 .6Q0 -2.1 5.8 .4" fill="none" stroke="#140b08" stroke-width="1.3"/></g><g transform="translate(179.6 88.7)rotate(117)"><ellipse rx="7.4" ry="4.8" fill="url(#gb20)"/><path d="M-5.2 .6Q0 -1.9 5.2 .4" fill="none" stroke="#140b08" stroke-width="1.3"/></g><g transform="translate(261.8 92.8)rotate(52)"><ellipse rx="9.2" ry="7.2" fill="url(#gb22)"/></g><g transform="translate(221.4 132.9)rotate(50)"><ellipse rx="8.8" ry="6" fill="url(#gb23)"/><path d="M-6.1 .6Q0 -2.4 6.1 .4" fill="none" stroke="#140b08" stroke-width="1.3"/></g><g transform="translate(225.2 119.9)rotate(9)"><ellipse rx="6.9" ry="5.1" fill="url(#gb21)"/><path d="M-4.8 .6Q0 -2.1 4.8 .4" fill="none" stroke="#140b08" stroke-width="1.3"/></g><g transform="translate(239.5 42)rotate(78)"><ellipse rx="9.2" ry="6.3" fill="url(#gb23)"/><path d="M-6.4 .6Q0 -2.5 6.4 .4" fill="none" stroke="#140b08" stroke-width="1.3"/></g><g transform="translate(262.7 149.2)rotate(95)"><ellipse rx="6.7" ry="4.6" fill="url(#gb23)"/><path d="M-4.7 .6Q0 -1.8 4.7 .4" fill="none" stroke="#140b08" stroke-width="1.3"/></g><g transform="translate(234.2 171.3)rotate(165)"><ellipse rx="9.2" ry="7" fill="url(#gb20)"/><path d="M-6.4 .6Q0 -2.8 6.4 .4" fill="none" stroke="#140b08" stroke-width="1.3"/></g><g transform="translate(189.6 98.3)rotate(137)"><ellipse rx="7.8" ry="5.8" fill="url(#gb22)"/></g><g transform="translate(251.1 184.5)rotate(16)"><ellipse rx="7.8" ry="4.8" fill="url(#gb21)"/></g><g transform="translate(211.3 120.9)rotate(99)"><ellipse rx="6.8" ry="4.4" fill="url(#gb22)"/></g><g transform="translate(188.4 82.7)rotate(48)"><ellipse rx="8.2" ry="6.5" fill="url(#gb20)"/></g><g transform="translate(228.9 142.8)rotate(19)"><ellipse rx="7.9" ry="5.5" fill="url(#gb23)"/><path d="M-5.5 .6Q0 -2.2 5.5 .4" fill="none" stroke="#140b08" stroke-width="1.3"/></g><g transform="translate(217.1 34.8)rotate(99)"><ellipse rx="7.3" ry="5.7" fill="url(#gb20)"/><path d="M-5.1 .6Q0 -2.3 5.1 .4" fill="none" stroke="#140b08" stroke-width="1.3"/></g><g transform="translate(258.2 69.6)rotate(23)"><ellipse rx="8.5" ry="6" fill="url(#gb23)"/></g><g transform="translate(213.2 43.9)rotate(147)"><ellipse rx="8.8" ry="5.8" fill="url(#gb21)"/></g><g transform="translate(261.8 114.7)rotate(128)"><ellipse rx="8.3" ry="5.2" fill="url(#gb21)"/><path d="M-5.8 .6Q0 -2.1 5.8 .4" fill="none" stroke="#140b08" stroke-width="1.3"/></g><g transform="translate(245.4 149.1)rotate(69)"><ellipse rx="8.2" ry="5.7" fill="url(#gb23)"/></g><g transform="translate(207.7 50.3)rotate(44)"><ellipse rx="8.3" ry="5.5" fill="url(#gb23)"/></g><g transform="translate(191.7 129.1)rotate(115)"><ellipse rx="9" ry="7.1" fill="url(#gb22)"/><path d="M-6.3 .6Q0 -2.8 6.3 .4" fill="none" stroke="#140b08" stroke-width="1.3"/></g><g transform="translate(255.9 143.2)rotate(92)"><ellipse rx="7.2" ry="5.6" fill="url(#gb23)"/></g><g transform="translate(200.5 84.4)rotate(6)"><ellipse rx="9" ry="5.9" fill="url(#gb20)"/></g><g transform="translate(203.9 164.6)rotate(79)"><ellipse rx="7.9" ry="5.4" fill="url(#gb23)"/><path d="M-5.5 .6Q0 -2.2 5.5 .4" fill="none" stroke="#140b08" stroke-width="1.3"/></g><g transform="translate(233.9 73.4)rotate(157)"><ellipse rx="7.2" ry="4.5" fill="url(#gb20)"/></g><g transform="translate(213.5 178.4)rotate(82)"><ellipse rx="7.9" ry="6.2" fill="url(#gb23)"/></g><g transform="translate(203.3 61.6)rotate(167)"><ellipse rx="8" ry="6.1" fill="url(#gb20)"/></g><g transform="translate(204.8 33.7)rotate(171)"><ellipse rx="7.4" ry="5.6" fill="url(#gb23)"/><path d="M-5.2 .6Q0 -2.2 5.2 .4" fill="none" stroke="#140b08" stroke-width="1.3"/></g><g transform="translate(231.2 195.1)rotate(139)"><ellipse rx="8.4" ry="5.6" fill="url(#gb22)"/></g><g transform="translate(181 191.8)rotate(62)"><ellipse rx="7.7" ry="5.9" fill="url(#gb23)"/><path d="M-5.4 .6Q0 -2.4 5.4 .4" fill="none" stroke="#140b08" stroke-width="1.3"/></g><g transform="translate(182 48.6)rotate(72)"><ellipse rx="8.3" ry="5.5" fill="url(#gb21)"/></g><g transform="translate(248.5 70.8)rotate(9)"><ellipse rx="7.8" ry="5.5" fill="url(#gb21)"/></g><g transform="translate(191 143.8)rotate(128)"><ellipse rx="7.7" ry="5.6" fill="url(#gb22)"/></g><g transform="translate(212 85.1)rotate(127)"><ellipse rx="8.2" ry="5.5" fill="url(#gb23)"/></g><g transform="translate(186.5 161)rotate(141)"><ellipse rx="9.4" ry="6" fill="url(#gb22)"/></g><g transform="translate(263.3 45.1)rotate(136)"><ellipse rx="8" ry="5" fill="url(#gb22)"/></g><g transform="translate(233.8 89.2)rotate(113)"><ellipse rx="8" ry="5.2" fill="url(#gb23)"/></g><g transform="translate(264.5 82.3)rotate(76)"><ellipse rx="7.4" ry="5.7" fill="url(#gb21)"/><path d="M-5.2 .6Q0 -2.3 5.2 .4" fill="none" stroke="#140b08" stroke-width="1.3"/></g><g transform="translate(236.2 148.8)rotate(100)"><ellipse rx="6.7" ry="4.7" fill="url(#gb23)"/></g><g transform="translate(245.8 90.4)rotate(137)"><ellipse rx="9.3" ry="6.3" fill="url(#gb20)"/><path d="M-6.5 .6Q0 -2.5 6.5 .4" fill="none" stroke="#140b08" stroke-width="1.3"/></g><g transform="translate(185.6 64.4)rotate(65)"><ellipse rx="8.1" ry="5.3" fill="url(#gb21)"/><path d="M-5.7 .6Q0 -2.1 5.7 .4" fill="none" stroke="#140b08" stroke-width="1.3"/></g><g transform="translate(231.6 131.9)rotate(97)"><ellipse rx="7.4" ry="5" fill="url(#gb20)"/></g><g transform="translate(224.8 62.4)rotate(142)"><ellipse rx="7.7" ry="5.3" fill="url(#gb21)"/><path d="M-5.4 .6Q0 -2.1 5.4 .4" fill="none" stroke="#140b08" stroke-width="1.3"/></g><g transform="translate(245.6 189.2)rotate(115)"><ellipse rx="6.7" ry="5.2" fill="url(#gb20)"/></g><g transform="translate(257.3 48.8)rotate(125)"><ellipse rx="7.3" ry="5.2" fill="url(#gb20)"/></g><g transform="translate(192.8 52.7)rotate(112)"><ellipse rx="7.4" ry="5" fill="url(#gb22)"/></g><g transform="translate(208.6 90.4)rotate(39)"><ellipse rx="7.5" ry="5.9" fill="url(#gb23)"/></g><g transform="translate(198.8 138.7)rotate(142)"><ellipse rx="6.7" ry="5.2" fill="url(#gb22)"/></g><g transform="translate(227.1 161.2)rotate(40)"><ellipse rx="9.4" ry="6.2" fill="url(#gb22)"/><path d="M-6.6 .6Q0 -2.5 6.6 .4" fill="none" stroke="#140b08" stroke-width="1.3"/></g><g transform="translate(250.7 120.1)rotate(79)"><ellipse rx="9.3" ry="6.3" fill="url(#gb23)"/><path d="M-6.5 .6Q0 -2.5 6.5 .4" fill="none" stroke="#140b08" stroke-width="1.3"/></g><g transform="translate(243.3 63.1)rotate(137)"><ellipse rx="7.1" ry="5.2" fill="url(#gb23)"/><path d="M-5 .6Q0 -2.1 5 .4" fill="none" stroke="#140b08" stroke-width="1.3"/></g><g transform="translate(264.2 63.7)rotate(159)"><ellipse rx="8.6" ry="5.7" fill="url(#gb21)"/></g><g transform="translate(250 52.2)rotate(120)"><ellipse rx="6.8" ry="4.8" fill="url(#gb20)"/></g><g transform="translate(206.7 173.7)rotate(4)"><ellipse rx="8.5" ry="6.7" fill="url(#gb22)"/><path d="M-6 .6Q0 -2.7 6 .4" fill="none" stroke="#140b08" stroke-width="1.3"/></g><g transform="translate(220.6 74.5)rotate(108)"><ellipse rx="7.6" ry="6.1" fill="url(#gb23)"/><path d="M-5.3 .6Q0 -2.4 5.3 .4" fill="none" stroke="#140b08" stroke-width="1.3"/></g><g transform="translate(256.4 43.5)rotate(125)"><ellipse rx="6.9" ry="4.3" fill="url(#gb21)"/></g><g transform="translate(227.5 79.1)rotate(122)"><ellipse rx="6.7" ry="4.4" fill="url(#gb20)"/></g><g transform="translate(248.5 169.1)rotate(64)"><ellipse rx="7.4" ry="5.3" fill="url(#gb22)"/><path d="M-5.2 .6Q0 -2.1 5.2 .4" fill="none" stroke="#140b08" stroke-width="1.3"/></g><g transform="translate(217.9 90.3)rotate(3)"><ellipse rx="9.2" ry="6.2" fill="url(#gb22)"/><path d="M-6.4 .6Q0 -2.5 6.4 .4" fill="none" stroke="#140b08" stroke-width="1.3"/></g><g transform="translate(268.6 163.5)rotate(20)"><ellipse rx="8.3" ry="5.5" fill="url(#gb20)"/></g><g transform="translate(192.6 113.4)rotate(160)"><ellipse rx="8" ry="5.4" fill="url(#gb23)"/></g></g></g><g clip-path="url(#cb3)"><g filter="url(#blb)"><rect x="267.8" y="27.6" width="87.2" height="161.8" fill="#100a09"/><g transform="translate(286.8 169.4)rotate(167)"><ellipse rx="9.3" ry="6.9" fill="url(#gb33)"/></g><g transform="translate(282.9 149.1)rotate(126)"><ellipse rx="6.8" ry="4.4" fill="url(#gb30)"/></g><g transform="translate(342 64.4)rotate(102)"><ellipse rx="9.3" ry="6.5" fill="url(#gb30)"/></g><g transform="translate(345.4 154.3)rotate(53)"><ellipse rx="8.7" ry="6.1" fill="url(#gb32)"/><path d="M-6.1 .6Q0 -2.4 6.1 .4" fill="none" stroke="#0b0706" stroke-width="1.3"/></g><g transform="translate(309 151.4)rotate(1)"><ellipse rx="9.2" ry="6.9" fill="url(#gb31)"/></g><g transform="translate(337.6 70.4)rotate(160)"><ellipse rx="7" ry="4.5" fill="url(#gb30)"/></g><g transform="translate(331.4 79.1)rotate(33)"><ellipse rx="7" ry="4.8" fill="url(#gb30)"/><path d="M-4.9 .6Q0 -1.9 4.9 .4" fill="none" stroke="#0b0706" stroke-width="1.3"/></g><g transform="translate(319.6 92)rotate(76)"><ellipse rx="6.7" ry="5" fill="url(#gb30)"/><path d="M-4.7 .6Q0 -2 4.7 .4" fill="none" stroke="#0b0706" stroke-width="1.3"/></g><g transform="translate(275.1 101.6)rotate(85)"><ellipse rx="6.7" ry="4.9" fill="url(#gb31)"/></g><g transform="translate(329 40.9)rotate(89)"><ellipse rx="9.2" ry="6" fill="url(#gb32)"/></g><g transform="translate(270.4 71.9)rotate(13)"><ellipse rx="7.2" ry="5.3" fill="url(#gb31)"/></g><g transform="translate(318.2 122.1)rotate(130)"><ellipse rx="8.3" ry="5.6" fill="url(#gb30)"/></g><g transform="translate(296.6 31.8)rotate(93)"><ellipse rx="7.3" ry="5.6" fill="url(#gb32)"/><path d="M-5.1 .6Q0 -2.2 5.1 .4" fill="none" stroke="#0b0706" stroke-width="1.3"/></g><g transform="translate(356.3 139.3)rotate(30)"><ellipse rx="8.1" ry="5.5" fill="url(#gb32)"/></g><g transform="translate(288.6 83.8)rotate(125)"><ellipse rx="7.5" ry="5.2" fill="url(#gb31)"/></g><g transform="translate(347.9 110.4)rotate(31)"><ellipse rx="6.9" ry="4.4" fill="url(#gb33)"/></g><g transform="translate(307.8 72.7)rotate(66)"><ellipse rx="8.4" ry="5.8" fill="url(#gb31)"/><path d="M-5.9 .6Q0 -2.3 5.9 .4" fill="none" stroke="#0b0706" stroke-width="1.3"/></g><g transform="translate(330.7 164.5)rotate(16)"><ellipse rx="8.3" ry="5.5" fill="url(#gb33)"/><path d="M-5.8 .6Q0 -2.2 5.8 .4" fill="none" stroke="#0b0706" stroke-width="1.3"/></g><g transform="translate(280.1 182.1)rotate(74)"><ellipse rx="8.4" ry="5.8" fill="url(#gb32)"/><path d="M-5.9 .6Q0 -2.3 5.9 .4" fill="none" stroke="#0b0706" stroke-width="1.3"/></g><g transform="translate(276.5 62.6)rotate(101)"><ellipse rx="7.3" ry="5.1" fill="url(#gb32)"/></g><g transform="translate(339.7 183.6)rotate(69)"><ellipse rx="8.5" ry="6.6" fill="url(#gb30)"/><path d="M-5.9 .6Q0 -2.6 5.9 .4" fill="none" stroke="#0b0706" stroke-width="1.3"/></g><g transform="translate(294.6 92.5)rotate(144)"><ellipse rx="7.5" ry="4.8" fill="url(#gb32)"/></g><g transform="translate(328.6 182)rotate(176)"><ellipse rx="8.4" ry="6.3" fill="url(#gb30)"/></g><g transform="translate(269.3 190.4)rotate(17)"><ellipse rx="8.8" ry="6.2" fill="url(#gb30)"/><path d="M-6.1 .6Q0 -2.5 6.1 .4" fill="none" stroke="#0b0706" stroke-width="1.3"/></g><g transform="translate(333.7 150.5)rotate(52)"><ellipse rx="7.9" ry="5.2" fill="url(#gb33)"/></g><g transform="translate(333.4 128.4)rotate(38)"><ellipse rx="7.5" ry="5.3" fill="url(#gb32)"/></g><g transform="translate(358.7 44.5)rotate(15)"><ellipse rx="6.6" ry="4.6" fill="url(#gb30)"/><path d="M-4.6 .6Q0 -1.8 4.6 .4" fill="none" stroke="#0b0706" stroke-width="1.3"/></g><g transform="translate(274.8 122.2)rotate(57)"><ellipse rx="7.9" ry="5.6" fill="url(#gb33)"/><path d="M-5.5 .6Q0 -2.2 5.5 .4" fill="none" stroke="#0b0706" stroke-width="1.3"/></g><g transform="translate(305.7 42.9)rotate(112)"><ellipse rx="7.3" ry="4.7" fill="url(#gb30)"/><path d="M-5.1 .6Q0 -1.9 5.1 .4" fill="none" stroke="#0b0706" stroke-width="1.3"/></g><g transform="translate(298.5 133.4)rotate(100)"><ellipse rx="8.9" ry="5.6" fill="url(#gb30)"/></g><g transform="translate(301.8 104.5)rotate(54)"><ellipse rx="7.1" ry="5.2" fill="url(#gb32)"/></g><g transform="translate(322.9 55)rotate(136)"><ellipse rx="9.1" ry="7.2" fill="url(#gb30)"/></g><g transform="translate(352.2 182.5)rotate(28)"><ellipse rx="8.8" ry="6.5" fill="url(#gb33)"/></g><g transform="translate(272 112.5)rotate(109)"><ellipse rx="8.7" ry="6.8" fill="url(#gb33)"/><path d="M-6.1 .6Q0 -2.7 6.1 .4" fill="none" stroke="#0b0706" stroke-width="1.3"/></g><g transform="translate(282 54.9)rotate(29)"><ellipse rx="7" ry="4.4" fill="url(#gb32)"/><path d="M-4.9 .6Q0 -1.8 4.9 .4" fill="none" stroke="#0b0706" stroke-width="1.3"/></g><g transform="translate(356.5 59.6)rotate(103)"><ellipse rx="7" ry="4.5" fill="url(#gb32)"/><path d="M-4.9 .6Q0 -1.8 4.9 .4" fill="none" stroke="#0b0706" stroke-width="1.3"/></g><g transform="translate(347.1 93.1)rotate(89)"><ellipse rx="7.5" ry="5.2" fill="url(#gb33)"/><path d="M-5.3 .6Q0 -2.1 5.3 .4" fill="none" stroke="#0b0706" stroke-width="1.3"/></g><g transform="translate(303.3 121.6)rotate(48)"><ellipse rx="9.1" ry="5.7" fill="url(#gb31)"/><path d="M-6.4 .6Q0 -2.3 6.4 .4" fill="none" stroke="#0b0706" stroke-width="1.3"/></g><g transform="translate(283 113.1)rotate(83)"><ellipse rx="8.1" ry="5.3" fill="url(#gb32)"/><path d="M-5.6 .6Q0 -2.1 5.6 .4" fill="none" stroke="#0b0706" stroke-width="1.3"/></g><g transform="translate(346.7 192)rotate(107)"><ellipse rx="7.9" ry="5.7" fill="url(#gb33)"/><path d="M-5.5 .6Q0 -2.3 5.5 .4" fill="none" stroke="#0b0706" stroke-width="1.3"/></g><g transform="translate(313.2 78.3)rotate(68)"><ellipse rx="9.4" ry="7.2" fill="url(#gb31)"/></g><g transform="translate(332.5 30.2)rotate(127)"><ellipse rx="8.4" ry="5.9" fill="url(#gb33)"/></g><g transform="translate(338.4 170.6)rotate(30)"><ellipse rx="7.2" ry="4.6" fill="url(#gb31)"/></g><g transform="translate(272.8 173)rotate(152)"><ellipse rx="6.9" ry="4.3" fill="url(#gb32)"/><path d="M-4.8 .6Q0 -1.7 4.8 .4" fill="none" stroke="#0b0706" stroke-width="1.3"/></g><g transform="translate(353.8 163.4)rotate(97)"><ellipse rx="7.4" ry="5.7" fill="url(#gb32)"/><path d="M-5.2 .6Q0 -2.3 5.2 .4" fill="none" stroke="#0b0706" stroke-width="1.3"/></g><g transform="translate(311.4 128.5)rotate(67)"><ellipse rx="7.9" ry="5.5" fill="url(#gb33)"/></g><g transform="translate(327.5 119.4)rotate(175)"><ellipse rx="9.3" ry="7.2" fill="url(#gb31)"/><path d="M-6.5 .6Q0 -2.9 6.5 .4" fill="none" stroke="#0b0706" stroke-width="1.3"/></g><g transform="translate(317.6 43.3)rotate(167)"><ellipse rx="8.1" ry="5.8" fill="url(#gb30)"/></g><g transform="translate(304.9 83.4)rotate(63)"><ellipse rx="8.5" ry="5.6" fill="url(#gb30)"/><path d="M-5.9 .6Q0 -2.2 5.9 .4" fill="none" stroke="#0b0706" stroke-width="1.3"/></g><g transform="translate(317.8 160.7)rotate(25)"><ellipse rx="7.6" ry="5.2" fill="url(#gb33)"/><path d="M-5.3 .6Q0 -2.1 5.3 .4" fill="none" stroke="#0b0706" stroke-width="1.3"/></g><g transform="translate(345.5 33.7)rotate(80)"><ellipse rx="7.1" ry="4.8" fill="url(#gb31)"/><path d="M-5 .6Q0 -1.9 5 .4" fill="none" stroke="#0b0706" stroke-width="1.3"/></g><g transform="translate(313.2 189.9)rotate(36)"><ellipse rx="8.9" ry="7" fill="url(#gb33)"/><path d="M-6.2 .6Q0 -2.8 6.2 .4" fill="none" stroke="#0b0706" stroke-width="1.3"/></g><g transform="translate(284.5 189.4)rotate(55)"><ellipse rx="8.8" ry="6.6" fill="url(#gb33)"/></g><g transform="translate(283 31.6)rotate(174)"><ellipse rx="6.8" ry="4.4" fill="url(#gb30)"/></g><g transform="translate(326.2 173.3)rotate(169)"><ellipse rx="8.3" ry="6.6" fill="url(#gb31)"/></g><g transform="translate(352.9 81.4)rotate(40)"><ellipse rx="7.5" ry="5.9" fill="url(#gb33)"/><path d="M-5.3 .6Q0 -2.4 5.3 .4" fill="none" stroke="#0b0706" stroke-width="1.3"/></g><g transform="translate(349.5 174.8)rotate(123)"><ellipse rx="7.8" ry="6" fill="url(#gb31)"/><path d="M-5.5 .6Q0 -2.4 5.5 .4" fill="none" stroke="#0b0706" stroke-width="1.3"/></g><g transform="translate(268.6 131.4)rotate(6)"><ellipse rx="7.8" ry="5.9" fill="url(#gb32)"/><path d="M-5.4 .6Q0 -2.4 5.4 .4" fill="none" stroke="#0b0706" stroke-width="1.3"/></g><g transform="translate(325.1 129.1)rotate(170)"><ellipse rx="7.4" ry="5.2" fill="url(#gb33)"/><path d="M-5.2 .6Q0 -2.1 5.2 .4" fill="none" stroke="#0b0706" stroke-width="1.3"/></g><g transform="translate(268.5 151.8)rotate(61)"><ellipse rx="7.3" ry="5.5" fill="url(#gb31)"/></g><g transform="translate(340.8 104)rotate(49)"><ellipse rx="8.8" ry="5.9" fill="url(#gb32)"/><path d="M-6.1 .6Q0 -2.4 6.1 .4" fill="none" stroke="#0b0706" stroke-width="1.3"/></g><g transform="translate(296.1 174.1)rotate(3)"><ellipse rx="8.2" ry="5.5" fill="url(#gb30)"/><path d="M-5.7 .6Q0 -2.2 5.7 .4" fill="none" stroke="#0b0706" stroke-width="1.3"/></g><g transform="translate(319.5 179.1)rotate(49)"><ellipse rx="8" ry="5.5" fill="url(#gb30)"/><path d="M-5.6 .6Q0 -2.2 5.6 .4" fill="none" stroke="#0b0706" stroke-width="1.3"/></g><g transform="translate(293 185.1)rotate(43)"><ellipse rx="8.7" ry="5.7" fill="url(#gb33)"/></g><g transform="translate(320.8 68.6)rotate(1)"><ellipse rx="8.7" ry="5.4" fill="url(#gb31)"/><path d="M-6.1 .6Q0 -2.2 6.1 .4" fill="none" stroke="#0b0706" stroke-width="1.3"/></g><g transform="translate(296.8 108.5)rotate(100)"><ellipse rx="6.9" ry="5.2" fill="url(#gb33)"/><path d="M-4.8 .6Q0 -2.1 4.8 .4" fill="none" stroke="#0b0706" stroke-width="1.3"/></g><g transform="translate(308.5 54.1)rotate(70)"><ellipse rx="7.7" ry="5.1" fill="url(#gb31)"/></g><g transform="translate(276.5 138.7)rotate(104)"><ellipse rx="7.9" ry="5.7" fill="url(#gb30)"/></g><g transform="translate(342.7 44.3)rotate(101)"><ellipse rx="8.9" ry="6.4" fill="url(#gb30)"/></g><g transform="translate(335 93.9)rotate(105)"><ellipse rx="7" ry="4.3" fill="url(#gb32)"/><path d="M-4.9 .6Q0 -1.7 4.9 .4" fill="none" stroke="#0b0706" stroke-width="1.3"/></g><g transform="translate(278.1 40.1)rotate(132)"><ellipse rx="8.7" ry="6.2" fill="url(#gb32)"/></g><g transform="translate(310.6 94.6)rotate(161)"><ellipse rx="7.8" ry="5.3" fill="url(#gb33)"/></g><g transform="translate(318.1 62.2)rotate(15)"><ellipse rx="8.8" ry="5.9" fill="url(#gb33)"/></g><g transform="translate(357.9 118.3)rotate(95)"><ellipse rx="6.8" ry="5.3" fill="url(#gb30)"/><path d="M-4.7 .6Q0 -2.1 4.7 .4" fill="none" stroke="#0b0706" stroke-width="1.3"/></g><g transform="translate(306.4 61.1)rotate(104)"><ellipse rx="7.3" ry="4.7" fill="url(#gb33)"/></g><g transform="translate(317.5 98.6)rotate(49)"><ellipse rx="6.9" ry="4.9" fill="url(#gb30)"/><path d="M-4.9 .6Q0 -1.9 4.9 .4" fill="none" stroke="#0b0706" stroke-width="1.3"/></g><g transform="translate(333.6 194)rotate(94)"><ellipse rx="7.7" ry="5.5" fill="url(#gb31)"/></g><g transform="translate(325.5 29.7)rotate(163)"><ellipse rx="9.2" ry="7.3" fill="url(#gb31)"/></g><g transform="translate(345.4 49.1)rotate(87)"><ellipse rx="7.2" ry="5.6" fill="url(#gb32)"/></g><g transform="translate(345.5 134.2)rotate(23)"><ellipse rx="7.4" ry="5.5" fill="url(#gb31)"/></g><g transform="translate(287.1 144)rotate(119)"><ellipse rx="9.3" ry="7.3" fill="url(#gb30)"/><path d="M-6.5 .6Q0 -2.9 6.5 .4" fill="none" stroke="#0b0706" stroke-width="1.3"/></g><g transform="translate(297.1 51.7)rotate(47)"><ellipse rx="8.8" ry="6.9" fill="url(#gb30)"/><path d="M-6.2 .6Q0 -2.8 6.2 .4" fill="none" stroke="#0b0706" stroke-width="1.3"/></g><g transform="translate(329.9 59.3)rotate(104)"><ellipse rx="7.4" ry="5.8" fill="url(#gb31)"/></g><g transform="translate(332.8 55.1)rotate(49)"><ellipse rx="8.7" ry="6.2" fill="url(#gb32)"/></g><g transform="translate(304 144.5)rotate(171)"><ellipse rx="7" ry="4.7" fill="url(#gb31)"/><path d="M-4.9 .6Q0 -1.9 4.9 .4" fill="none" stroke="#0b0706" stroke-width="1.3"/></g><g transform="translate(343.9 118.6)rotate(167)"><ellipse rx="9.3" ry="7.3" fill="url(#gb33)"/></g><g transform="translate(339.1 160.1)rotate(13)"><ellipse rx="8.9" ry="6.4" fill="url(#gb30)"/><path d="M-6.2 .6Q0 -2.6 6.2 .4" fill="none" stroke="#0b0706" stroke-width="1.3"/></g><g transform="translate(311.7 168.9)rotate(88)"><ellipse rx="6.8" ry="5.1" fill="url(#gb33)"/></g><g transform="translate(297.7 68.2)rotate(78)"><ellipse rx="7.2" ry="4.8" fill="url(#gb30)"/></g><g transform="translate(293.6 99.8)rotate(130)"><ellipse rx="6.8" ry="5.3" fill="url(#gb33)"/></g><g transform="translate(286.2 132.4)rotate(123)"><ellipse rx="7.2" ry="5" fill="url(#gb30)"/><path d="M-5 .6Q0 -2 5 .4" fill="none" stroke="#0b0706" stroke-width="1.3"/></g><g transform="translate(340.2 78.3)rotate(150)"><ellipse rx="9.4" ry="7.4" fill="url(#gb31)"/><path d="M-6.6 .6Q0 -2.9 6.6 .4" fill="none" stroke="#0b0706" stroke-width="1.3"/></g><g transform="translate(352 72)rotate(164)"><ellipse rx="7.8" ry="5.8" fill="url(#gb30)"/></g><g transform="translate(327.1 99.8)rotate(55)"><ellipse rx="8.6" ry="5.6" fill="url(#gb31)"/><path d="M-6 .6Q0 -2.2 6 .4" fill="none" stroke="#0b0706" stroke-width="1.3"/></g><g transform="translate(297.3 151.7)rotate(120)"><ellipse rx="7.5" ry="4.8" fill="url(#gb30)"/></g><g transform="translate(305.7 182.7)rotate(84)"><ellipse rx="8.1" ry="5.1" fill="url(#gb33)"/></g><g transform="translate(309.7 110.8)rotate(178)"><ellipse rx="9.3" ry="7.1" fill="url(#gb33)"/></g><g transform="translate(290.6 164.7)rotate(31)"><ellipse rx="8.3" ry="6" fill="url(#gb32)"/><path d="M-5.8 .6Q0 -2.4 5.8 .4" fill="none" stroke="#0b0706" stroke-width="1.3"/></g><g transform="translate(287.6 62)rotate(112)"><ellipse rx="6.6" ry="5.1" fill="url(#gb33)"/></g><g transform="translate(332.5 115)rotate(178)"><ellipse rx="9" ry="6.8" fill="url(#gb33)"/></g><g transform="translate(282.7 72.1)rotate(100)"><ellipse rx="8.4" ry="6.3" fill="url(#gb32)"/><path d="M-5.9 .6Q0 -2.5 5.9 .4" fill="none" stroke="#0b0706" stroke-width="1.3"/></g><g transform="translate(277.9 160.8)rotate(12)"><ellipse rx="8.2" ry="5.5" fill="url(#gb30)"/></g><g transform="translate(356.7 105)rotate(17)"><ellipse rx="8.7" ry="6.5" fill="url(#gb33)"/><path d="M-6.1 .6Q0 -2.6 6.1 .4" fill="none" stroke="#0b0706" stroke-width="1.3"/></g><g transform="translate(288.1 44.2)rotate(123)"><ellipse rx="6.7" ry="4.9" fill="url(#gb32)"/><path d="M-4.7 .6Q0 -2 4.7 .4" fill="none" stroke="#0b0706" stroke-width="1.3"/></g><g transform="translate(310 33.6)rotate(161)"><ellipse rx="6.6" ry="4.5" fill="url(#gb32)"/><path d="M-4.6 .6Q0 -1.8 4.6 .4" fill="none" stroke="#0b0706" stroke-width="1.3"/></g><g transform="translate(327.8 139.4)rotate(126)"><ellipse rx="9" ry="6.6" fill="url(#gb32)"/><path d="M-6.3 .6Q0 -2.6 6.3 .4" fill="none" stroke="#0b0706" stroke-width="1.3"/></g><g transform="translate(293.2 119.4)rotate(147)"><ellipse rx="7.6" ry="5.1" fill="url(#gb31)"/></g><g transform="translate(323 108.4)rotate(23)"><ellipse rx="8.7" ry="5.5" fill="url(#gb30)"/></g><g transform="translate(274.5 82.6)rotate(28)"><ellipse rx="9.4" ry="7.1" fill="url(#gb30)"/></g><g transform="translate(339.6 139.5)rotate(174)"><ellipse rx="8.3" ry="5.3" fill="url(#gb32)"/><path d="M-5.8 .6Q0 -2.1 5.8 .4" fill="none" stroke="#0b0706" stroke-width="1.3"/></g><g transform="translate(274 90.3)rotate(132)"><ellipse rx="7.8" ry="6" fill="url(#gb30)"/><path d="M-5.5 .6Q0 -2.4 5.5 .4" fill="none" stroke="#0b0706" stroke-width="1.3"/></g><g transform="translate(313.1 138.9)rotate(109)"><ellipse rx="7.2" ry="4.9" fill="url(#gb32)"/></g><g transform="translate(296.4 194.1)rotate(38)"><ellipse rx="9.3" ry="6.7" fill="url(#gb32)"/></g><g transform="translate(319.6 152.4)rotate(146)"><ellipse rx="7.6" ry="5.5" fill="url(#gb33)"/><path d="M-5.3 .6Q0 -2.2 5.3 .4" fill="none" stroke="#0b0706" stroke-width="1.3"/></g><g transform="translate(321.9 193)rotate(129)"><ellipse rx="9.3" ry="6" fill="url(#gb30)"/></g><g transform="translate(273.1 48.6)rotate(139)"><ellipse rx="7" ry="5.4" fill="url(#gb33)"/></g><g transform="translate(270.8 31)rotate(48)"><ellipse rx="8" ry="5.6" fill="url(#gb30)"/></g><g transform="translate(300.7 160.8)rotate(130)"><ellipse rx="8.5" ry="5.4" fill="url(#gb33)"/><path d="M-5.9 .6Q0 -2.2 5.9 .4" fill="none" stroke="#0b0706" stroke-width="1.3"/></g><g transform="translate(282.1 93.9)rotate(74)"><ellipse rx="8.8" ry="6.3" fill="url(#gb32)"/></g></g></g><g font-family="Liberation Serif, serif" font-size="9.8" fill="#1c1c1c" stroke="#222" stroke-width="0.25" text-anchor="middle"><text x="44.4" y="209.8">internal</text><text x="44.4" y="223.5">temperature</text><text x="44.4" y="236.7">of around 356°F</text><text x="44.4" y="250.4">(180°C)</text><text x="134.0" y="209.8">internal</text><text x="134.0" y="223.5">temperature of</text><text x="134.0" y="236.7">around 410°F</text><text x="134.0" y="250.4">(210°C)</text><text x="222.4" y="209.8">internal</text><text x="222.4" y="223.5">temperature of</text><text x="222.4" y="236.7">around 437°F</text><text x="222.4" y="250.4">(225°C)</text><text x="309.0" y="209.8">internal</text><text x="309.0" y="223.5">temperature of</text><text x="309.0" y="236.7">around 464°F</text><text x="309.0" y="250.4">(240°C)</text></g></svg>
<a class="t g" style="left:981.40px;top:520.00px;font-size:10.6px;color:#23419f;letter-spacing:-0.082px;text-decoration:underline;text-underline-offset:1.5px;">Read Less</a>
<div style="left:959px;top:641px;width:329px;height:1px;background:#c4c8dc"></div>
<span class="t g" style="left:975.30px;top:657.00px;font-size:11.1px;color:#7b7f86;letter-spacing:0.082px;">Type message here and press return key</span>
<svg class="ic" style="left:1256.4px;top:660.4px;" width="13.4" height="13.4" viewBox="0 0 13.4 13.4"><path d="M2.6 3.2A5.6 5.6 0 1 1 1.1 7.6" stroke="#111" stroke-width="1.5"/><path d="M0.9 0.9L2.5 3.9L5.6 3.3" stroke="#111" stroke-width="1.5"/></svg>
</aside>
<div style="left:1298px;top:2px;width:9px;height:791px;background:#f1f1f1"></div>
<div style="left:1298px;top:11px;width:9px;height:462px;background:#8a8a8a;border-radius:4.5px"></div>
<div style="left:0px;top:793px;width:1298px;height:15px;background:#f1f1f1"></div>
<div style="left:1298px;top:793px;width:9px;height:15px;background:#fff"></div>
<div style="left:0px;top:793px;width:1290px;height:15px;background:#8a8a8a;border-radius:5px"></div>
</div>
</body>
</html>
